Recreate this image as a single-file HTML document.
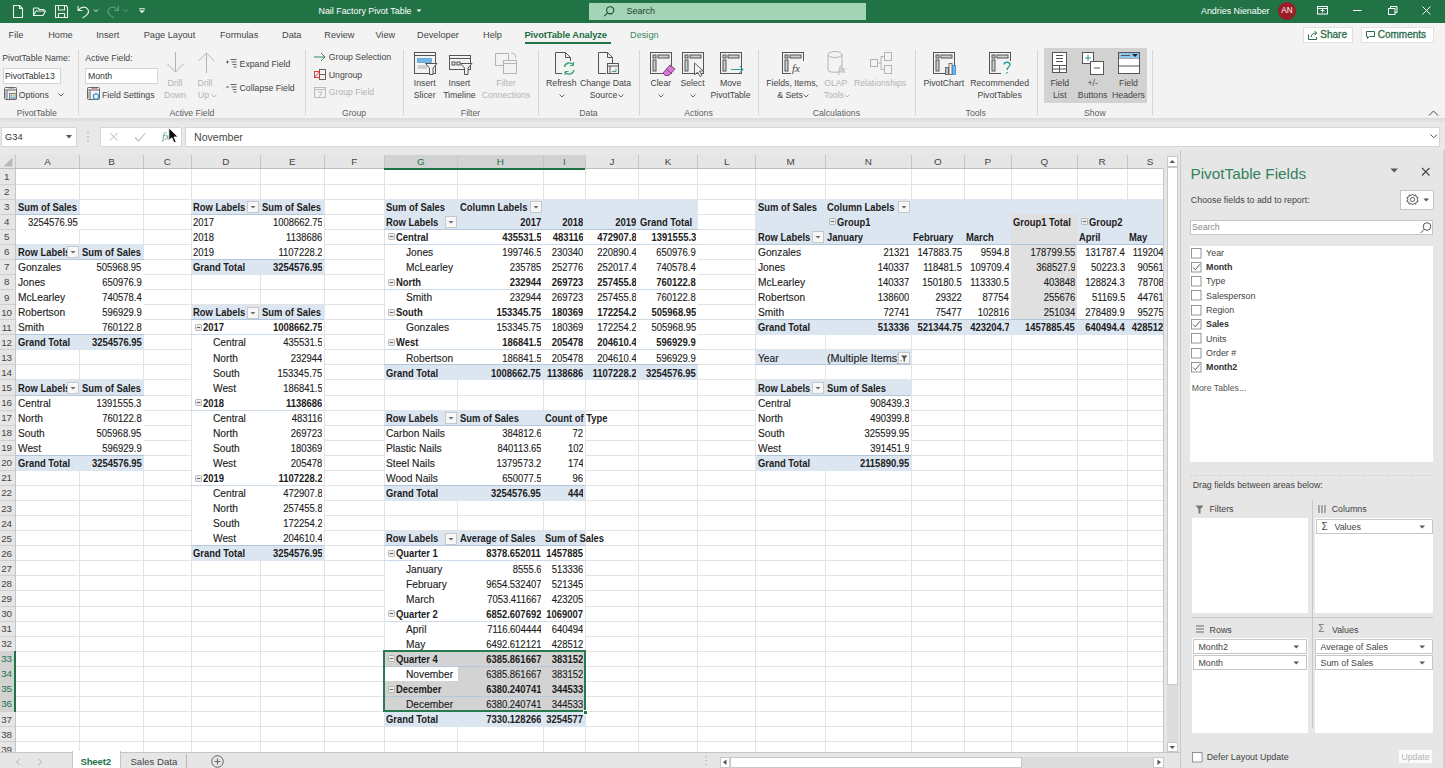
<!DOCTYPE html><html><head><meta charset="utf-8"><title>Excel</title><style>
html,body{margin:0;padding:0;}
body{width:1445px;height:768px;overflow:hidden;position:relative;background:#e6e6e6;font-family:"Liberation Sans",sans-serif;}
div{box-sizing:border-box;}
svg{overflow:visible}
.c{-webkit-text-stroke:0.12px currentColor}
.cb{}
</style></head><body>
<div style="position:absolute;left:0px;top:0px;width:1445px;height:23px;background:#217346;"></div>
<svg style="position:absolute;left:0px;top:0px;" width="160" height="23" viewBox="0 0 160 23">
<g fill="none" stroke="#e8f3ec" stroke-width="1.1" stroke-linejoin="round">
 <path d="M13.5 5.5 H19.5 L22.5 8.5 V17.5 H13.5 Z"/>
 <path d="M19.5 5.5 V8.5 H22.5"/>
 <path d="M33.5 8 H38 L39.5 9.5 H44 V11 M33.5 8 V15.5 H43 L45.5 11 H36 L33.5 15.5"/>
 <path d="M55.5 5.5 H66 L67.5 7 V17.5 H55.5 Z"/>
 <path d="M58.5 5.5 V10 H64.5 V5.5 M58.5 17.5 V13.5 H64.5 V17.5"/>
 <path d="M78 6 V10.5 H82.5 M78.5 10.2 C81 6.5 86 6 88 9.5 C90 13 86 16 82.5 18"/>
 <path d="M94 9.5 L96 11.5 L98 9.5" stroke-width="1"/>
</g>
<g fill="none" stroke="#5fa07d" stroke-width="1.1" stroke-linejoin="round">
 <path d="M118.5 6 V10.5 H114 M118 10.2 C115.5 6.5 110.5 6 108.5 9.5 C106.5 13 110.5 16 114 18"/>
 <path d="M123.5 9.5 L125.5 11.5 L127.5 9.5" stroke-width="1"/>
</g>
<g fill="#e8f3ec" stroke="none">
 <rect x="139" y="8.2" width="6" height="1"/>
 <path d="M139 10.3 H145 L142 13.3 Z"/>
</g>
</svg>
<div style="position:absolute;left:318.5px;top:3.50px;line-height:14px;font-size:8.9px;color:#ffffff;font-weight:normal;white-space:nowrap;">Nail Factory Pivot Table</div>
<svg style="position:absolute;left:416px;top:9px;" width="6" height="4" viewBox="0 0 6 4"><path d="M0.5 0.5 L3 3 L5.5 0.5" fill="#fff"/></svg>
<div style="position:absolute;left:589px;top:3px;width:277px;height:17px;background:#a4d4b6;"></div>
<svg style="position:absolute;left:602px;top:5px;" width="14" height="14" viewBox="0 0 14 14"><g fill="none" stroke="#1d4a30" stroke-width="1.1"><circle cx="8.2" cy="5.3" r="3.6"/><path d="M5.6 7.9 L2.3 11.2"/></g></svg>
<div style="position:absolute;left:626.5px;top:4.00px;line-height:14px;font-size:9px;color:#1f3d2b;font-weight:normal;white-space:nowrap;">Search</div>
<div style="position:absolute;left:1201px;top:4.20px;line-height:14px;font-size:8.9px;color:#ffffff;font-weight:normal;white-space:nowrap;">Andries Nienaber</div>
<div style="position:absolute;left:1278px;top:2px;width:18px;height:18px;background:#9c1c27;border-radius:50%;"></div>
<div style="position:absolute;left:1278.00px;width:18px;text-align:center;top:4.20px;line-height:14px;font-size:8.2px;color:#ffffff;font-weight:normal;white-space:nowrap;">AN</div>
<svg style="position:absolute;left:1310px;top:0px;" width="135" height="23" viewBox="0 0 135 23">
<g fill="none" stroke="#ffffff" stroke-width="1">
 <rect x="7.5" y="6.5" width="10" height="7.5"/>
 <path d="M10.5 10.5 H14.5 M12.5 8.5 V12.5 M7.5 8.5 H17.5" stroke-width="0.9"/>
 <path d="M43 10.5 H51.5"/>
 <rect x="78.5" y="8.5" width="6.5" height="6"/>
 <path d="M80.5 8.5 V6.5 H87 V12.5 H85"/>
 <path d="M112.5 6.5 L120.5 14.5 M120.5 6.5 L112.5 14.5"/>
</g></svg>
<div style="position:absolute;left:0px;top:23px;width:1445px;height:95px;background:#f3f3f3;"></div>
<div style="position:absolute;left:0px;top:118px;width:1445px;height:4px;background:linear-gradient(#d9d9d9,#e6e6e6);"></div>
<div style="position:absolute;left:8.6px;top:28.00px;line-height:14px;font-size:9.2px;color:#444444;font-weight:normal;white-space:nowrap;">File</div>
<div style="position:absolute;left:48.2px;top:28.00px;line-height:14px;font-size:9.2px;color:#444444;font-weight:normal;white-space:nowrap;">Home</div>
<div style="position:absolute;left:96.3px;top:28.00px;line-height:14px;font-size:9.2px;color:#444444;font-weight:normal;white-space:nowrap;">Insert</div>
<div style="position:absolute;left:143.7px;top:28.00px;line-height:14px;font-size:9.2px;color:#444444;font-weight:normal;white-space:nowrap;">Page Layout</div>
<div style="position:absolute;left:220px;top:28.00px;line-height:14px;font-size:9.2px;color:#444444;font-weight:normal;white-space:nowrap;">Formulas</div>
<div style="position:absolute;left:282px;top:28.00px;line-height:14px;font-size:9.2px;color:#444444;font-weight:normal;white-space:nowrap;">Data</div>
<div style="position:absolute;left:324.3px;top:28.00px;line-height:14px;font-size:9.2px;color:#444444;font-weight:normal;white-space:nowrap;">Review</div>
<div style="position:absolute;left:375.4px;top:28.00px;line-height:14px;font-size:9.2px;color:#444444;font-weight:normal;white-space:nowrap;">View</div>
<div style="position:absolute;left:417px;top:28.00px;line-height:14px;font-size:9.2px;color:#444444;font-weight:normal;white-space:nowrap;">Developer</div>
<div style="position:absolute;left:483px;top:28.00px;line-height:14px;font-size:9.2px;color:#444444;font-weight:normal;white-space:nowrap;">Help</div>
<div style="position:absolute;left:524.4px;top:28.00px;line-height:14px;font-size:9.4px;color:#1e6e42;font-weight:bold;white-space:nowrap;letter-spacing:-0.1px;">PivotTable Analyze</div>
<div style="position:absolute;left:524.5px;top:42.3px;width:86px;height:1.6px;background:#217346;"></div>
<div style="position:absolute;left:630px;top:28.00px;line-height:14px;font-size:9.2px;color:#3b8662;font-weight:normal;white-space:nowrap;">Design</div>
<div style="position:absolute;left:1303px;top:27px;width:50px;height:16px;background:#fff;border:1px solid #e1e1e1;"></div>
<svg style="position:absolute;left:1307px;top:29px;" width="12" height="12" viewBox="0 0 12 12"><g fill="none" stroke="#2b6b4b" stroke-width="1"><path d="M1.5 5.5 V10.5 H9.5 V8"/><path d="M4 8 C4.5 5 6.5 4 9.5 4 M7.5 2 L9.8 4 L7.5 6"/></g></svg>
<div style="position:absolute;left:1320.3px;top:28.30px;line-height:14px;font-size:10px;color:#2b6b4b;font-weight:normal;white-space:nowrap;-webkit-text-stroke:0.3px #2b6b4b;">Share</div>
<div style="position:absolute;left:1361px;top:27px;width:73px;height:16px;background:#fff;border:1px solid #e1e1e1;"></div>
<svg style="position:absolute;left:1365px;top:29px;" width="12" height="12" viewBox="0 0 12 12"><g fill="none" stroke="#2b6b4b" stroke-width="1"><path d="M1.5 2.5 H9.5 V7.5 H4.5 L2.5 9.5 V7.5 H1.5 Z"/></g></svg>
<div style="position:absolute;left:1377.7px;top:28.30px;line-height:14px;font-size:10px;color:#2b6b4b;font-weight:normal;white-space:nowrap;-webkit-text-stroke:0.3px #2b6b4b;">Comments</div>
<div style="position:absolute;left:78px;top:50px;width:1px;height:65px;background:#d6d6d6;"></div>
<div style="position:absolute;left:305px;top:50px;width:1px;height:65px;background:#d6d6d6;"></div>
<div style="position:absolute;left:403px;top:50px;width:1px;height:65px;background:#d6d6d6;"></div>
<div style="position:absolute;left:538px;top:50px;width:1px;height:65px;background:#d6d6d6;"></div>
<div style="position:absolute;left:639px;top:50px;width:1px;height:65px;background:#d6d6d6;"></div>
<div style="position:absolute;left:758px;top:50px;width:1px;height:65px;background:#d6d6d6;"></div>
<div style="position:absolute;left:915px;top:50px;width:1px;height:65px;background:#d6d6d6;"></div>
<div style="position:absolute;left:1037px;top:50px;width:1px;height:65px;background:#d6d6d6;"></div>
<div style="position:absolute;left:1152px;top:50px;width:1px;height:65px;background:#d6d6d6;"></div>
<div style="position:absolute;left:-23.30px;width:120px;text-align:center;top:105.60px;line-height:14px;font-size:8.7px;color:#5e5e5e;font-weight:normal;white-space:nowrap;">PivotTable</div>
<div style="position:absolute;left:132.00px;width:120px;text-align:center;top:105.60px;line-height:14px;font-size:8.7px;color:#5e5e5e;font-weight:normal;white-space:nowrap;">Active Field</div>
<div style="position:absolute;left:294.00px;width:120px;text-align:center;top:105.60px;line-height:14px;font-size:8.7px;color:#5e5e5e;font-weight:normal;white-space:nowrap;">Group</div>
<div style="position:absolute;left:410.50px;width:120px;text-align:center;top:105.60px;line-height:14px;font-size:8.7px;color:#5e5e5e;font-weight:normal;white-space:nowrap;">Filter</div>
<div style="position:absolute;left:528.50px;width:120px;text-align:center;top:105.60px;line-height:14px;font-size:8.7px;color:#5e5e5e;font-weight:normal;white-space:nowrap;">Data</div>
<div style="position:absolute;left:638.50px;width:120px;text-align:center;top:105.60px;line-height:14px;font-size:8.7px;color:#5e5e5e;font-weight:normal;white-space:nowrap;">Actions</div>
<div style="position:absolute;left:776.40px;width:120px;text-align:center;top:105.60px;line-height:14px;font-size:8.7px;color:#5e5e5e;font-weight:normal;white-space:nowrap;">Calculations</div>
<div style="position:absolute;left:915.70px;width:120px;text-align:center;top:105.60px;line-height:14px;font-size:8.7px;color:#5e5e5e;font-weight:normal;white-space:nowrap;">Tools</div>
<div style="position:absolute;left:1034.80px;width:120px;text-align:center;top:105.60px;line-height:14px;font-size:8.7px;color:#5e5e5e;font-weight:normal;white-space:nowrap;">Show</div>
<div style="position:absolute;left:2.2px;top:51.20px;line-height:14px;font-size:8.7px;color:#444444;font-weight:normal;white-space:nowrap;">PivotTable Name:</div>
<div style="position:absolute;left:2.5px;top:68px;width:58px;height:15.5px;background:#fff;border:1px solid #d4d4d4;"></div>
<div style="position:absolute;left:5px;top:69.00px;line-height:14px;font-size:8.7px;color:#333;font-weight:normal;white-space:nowrap;">PivotTable13</div>
<svg style="position:absolute;left:4px;top:87px;" width="14" height="14" viewBox="0 0 14 14"><g fill="none" stroke="#666" stroke-width="1"><rect x="0.5" y="0.5" width="12" height="12" rx="1"/><path d="M0.5 3 H12.5 M3 3 V12.5"/></g><rect x="4.5" y="1.2" width="6" height="1" fill="#aaa"/><rect x="1.2" y="5" width="1" height="6" fill="#aaa"/><rect x="5.5" y="6.5" width="6.5" height="5.5" fill="#f3f3f3" stroke="#666" stroke-width="0.8"/><rect x="6.5" y="7.5" width="2" height="1.6" fill="#4ab6e8"/><rect x="9" y="7.5" width="2" height="1.6" fill="#e8c84a"/><rect x="6.5" y="9.6" width="2" height="1.6" fill="#4ab6a0"/><rect x="9" y="9.6" width="2" height="1.6" fill="#4ab6e8"/></svg>
<div style="position:absolute;left:18.8px;top:87.50px;line-height:14px;font-size:8.7px;color:#444444;font-weight:normal;white-space:nowrap;">Options</div>
<svg style="position:absolute;left:57.5px;top:93px;" width="6" height="4" viewBox="0 0 6 4"><path d="M0.5 0.5 L3 3 L5.5 0.5" fill="none" stroke="#555" stroke-width="0.9"/></svg>
<div style="position:absolute;left:85.3px;top:51.20px;line-height:14px;font-size:8.7px;color:#444444;font-weight:normal;white-space:nowrap;">Active Field:</div>
<div style="position:absolute;left:85.3px;top:68px;width:72.5px;height:15.5px;background:#fff;border:1px solid #d4d4d4;"></div>
<div style="position:absolute;left:88px;top:69.00px;line-height:14px;font-size:8.7px;color:#333;font-weight:normal;white-space:nowrap;">Month</div>
<svg style="position:absolute;left:86.5px;top:87px;" width="14" height="14" viewBox="0 0 14 14"><g fill="none" stroke="#666" stroke-width="1"><rect x="0.5" y="0.5" width="12" height="12" rx="1"/><path d="M0.5 3 H12.5 M3 3 V12.5"/></g><rect x="4.5" y="1.2" width="6" height="1" fill="#c77"/><rect x="1.2" y="5" width="1" height="6" fill="#aaa"/><path d="M9 6.5 L11.5 8 V11 L9 12.5 L6.5 11 V8 Z" fill="#f3f3f3" stroke="#2f9ad6" stroke-width="1.3"/></svg>
<div style="position:absolute;left:101.9px;top:87.50px;line-height:14px;font-size:8.7px;color:#444444;font-weight:normal;white-space:nowrap;">Field Settings</div>
<svg style="position:absolute;left:165px;top:51px;" width="22" height="24" viewBox="0 0 22 24"><g fill="none" stroke="#b4b4b4" stroke-width="1"><path d="M10.5 1 V21 M2.5 13 L10.5 21 L18.5 13"/></g></svg>
<div style="position:absolute;left:155.00px;width:40px;text-align:center;top:76.30px;line-height:14px;font-size:8.7px;color:#b4b4b4;font-weight:normal;white-space:nowrap;">Drill</div>
<div style="position:absolute;left:155.00px;width:40px;text-align:center;top:88.40px;line-height:14px;font-size:8.7px;color:#b4b4b4;font-weight:normal;white-space:nowrap;">Down</div>
<svg style="position:absolute;left:196px;top:51px;" width="22" height="24" viewBox="0 0 22 24"><g fill="none" stroke="#b4b4b4" stroke-width="1"><path d="M10.5 2 V22 M2.5 10 L10.5 2 L18.5 10"/></g></svg>
<div style="position:absolute;left:185.00px;width:40px;text-align:center;top:76.30px;line-height:14px;font-size:8.7px;color:#b4b4b4;font-weight:normal;white-space:nowrap;">Drill</div>
<div style="position:absolute;left:183.50px;width:40px;text-align:center;top:88.40px;line-height:14px;font-size:8.7px;color:#b4b4b4;font-weight:normal;white-space:nowrap;">Up</div>
<svg style="position:absolute;left:211px;top:93.5px;" width="6" height="4" viewBox="0 0 6 4"><path d="M0.5 0.5 L3 3 L5.5 0.5" fill="none" stroke="#b4b4b4" stroke-width="0.9"/></svg>
<svg style="position:absolute;left:225px;top:57px;" width="14" height="12" viewBox="0 0 14 12"><g fill="none" stroke="#555" stroke-width="0.9"><path d="M1 5 H4 M2.5 3.5 V6.5 M5.5 2.5 H11.5 M6.5 5 H11.5 M7.5 7.5 H11.5 M8.5 10 H11.5"/></g></svg>
<div style="position:absolute;left:239.6px;top:56.90px;line-height:14px;font-size:8.7px;color:#444444;font-weight:normal;white-space:nowrap;">Expand Field</div>
<svg style="position:absolute;left:225px;top:82px;" width="14" height="12" viewBox="0 0 14 12"><g fill="none" stroke="#555" stroke-width="0.9"><path d="M1 5 H4 M5.5 2.5 H11.5 M6.5 5 H11.5 M7.5 7.5 H11.5 M8.5 10 H11.5"/></g></svg>
<div style="position:absolute;left:239.6px;top:81.30px;line-height:14px;font-size:8.7px;color:#444444;font-weight:normal;white-space:nowrap;">Collapse Field</div>
<svg style="position:absolute;left:313px;top:51px;" width="14" height="12" viewBox="0 0 14 12"><g fill="none" stroke="#2f8a5e" stroke-width="1"><path d="M1 6 H12 M8 2 L12 6 L8 10"/></g></svg>
<div style="position:absolute;left:328.8px;top:50.30px;line-height:14px;font-size:8.7px;color:#444444;font-weight:normal;white-space:nowrap;">Group Selection</div>
<svg style="position:absolute;left:313px;top:68px;" width="14" height="13" viewBox="0 0 14 13"><g fill="none" stroke="#555" stroke-width="0.9"><rect x="6.5" y="1.5" width="6" height="10"/><path d="M6.5 6.5 H12.5"/></g><g fill="none" stroke="#d13438" stroke-width="0.9"><rect x="1.5" y="3.5" width="5" height="6"/><path d="M1.5 9.5 L6.5 3.5"/></g></svg>
<div style="position:absolute;left:328.8px;top:67.80px;line-height:14px;font-size:8.7px;color:#444444;font-weight:normal;white-space:nowrap;">Ungroup</div>
<svg style="position:absolute;left:313px;top:85px;" width="14" height="13" viewBox="0 0 14 13"><g fill="none" stroke="#b4b4b4" stroke-width="0.9"><rect x="1.5" y="2.5" width="11" height="10"/><path d="M1.5 4.5 H12.5 M5 7 H9 L6.5 11.5"/></g></svg>
<div style="position:absolute;left:328.8px;top:85.30px;line-height:14px;font-size:8.7px;color:#b4b4b4;font-weight:normal;white-space:nowrap;">Group Field</div>
<svg style="position:absolute;left:414px;top:52px;" width="24" height="24" viewBox="0 0 24 24"><g fill="none" stroke="#555" stroke-width="1"><rect x="0.5" y="0.5" width="21" height="21"/><path d="M0.5 3.5 H21.5"/></g><rect x="3.5" y="6.5" width="14" height="4" fill="#6cb7ef" stroke="#4a8ec2" stroke-width="0.6"/><rect x="3.5" y="13" width="10" height="4" fill="#cfcfcf"/><path d="M11.5 11.5 H23 L19 16 V22.5 H15.5 V16 Z" fill="#f3f3f3" stroke="#555" stroke-width="1"/></svg>
<div style="position:absolute;left:399.70px;width:50px;text-align:center;top:76.30px;line-height:14px;font-size:8.7px;color:#444444;font-weight:normal;white-space:nowrap;">Insert</div>
<div style="position:absolute;left:399.70px;width:50px;text-align:center;top:88.40px;line-height:14px;font-size:8.7px;color:#444444;font-weight:normal;white-space:nowrap;">Slicer</div>
<svg style="position:absolute;left:449px;top:55px;" width="24" height="21" viewBox="0 0 24 21"><g fill="none" stroke="#555" stroke-width="1"><rect x="0.5" y="0.5" width="21" height="14"/><path d="M0.5 3.5 H21.5"/><rect x="3" y="7" width="3" height="3"/><rect x="8" y="7" width="3" height="3"/></g><path d="M11.5 8.5 H23 L19 13 V19.5 H15.5 V13 Z" fill="#f3f3f3" stroke="#555" stroke-width="1"/></svg>
<div style="position:absolute;left:434.40px;width:50px;text-align:center;top:76.30px;line-height:14px;font-size:8.7px;color:#444444;font-weight:normal;white-space:nowrap;">Insert</div>
<div style="position:absolute;left:434.40px;width:50px;text-align:center;top:88.40px;line-height:14px;font-size:8.7px;color:#444444;font-weight:normal;white-space:nowrap;">Timeline</div>
<svg style="position:absolute;left:495px;top:51px;" width="24" height="24" viewBox="0 0 24 24"><g fill="none" stroke="#b4b4b4" stroke-width="1"><rect x="0.5" y="2.5" width="13" height="12"/><rect x="8.5" y="9.5" width="13" height="13" fill="#f3f3f3"/><path d="M8.5 12.5 H21.5 M16 2 C19 2 21 4 21 7"/></g></svg>
<div style="position:absolute;left:471.00px;width:70px;text-align:center;top:76.30px;line-height:14px;font-size:8.7px;color:#b4b4b4;font-weight:normal;white-space:nowrap;">Filter</div>
<div style="position:absolute;left:471.00px;width:70px;text-align:center;top:88.40px;line-height:14px;font-size:8.7px;color:#b4b4b4;font-weight:normal;white-space:nowrap;">Connections</div>
<svg style="position:absolute;left:552px;top:52px;" width="24" height="24" viewBox="0 0 24 24"><g fill="none" stroke="#555" stroke-width="1"><path d="M3.5 0.5 H13.5 L18.5 5.5 V9 M3.5 0.5 V21.5 H10 M13.5 0.5 V5.5 H18.5"/></g><g fill="none" stroke="#3aa572" stroke-width="1.4"><path d="M12.5 15 A5 5 0 0 1 21.5 13 M22 18 A5 5 0 0 1 13 20"/><path d="M21.5 10 V13.5 H18 M13 23 V19.5 H16.5" stroke-width="1"/></g></svg>
<div style="position:absolute;left:536.30px;width:50px;text-align:center;top:76.30px;line-height:14px;font-size:8.7px;color:#444444;font-weight:normal;white-space:nowrap;">Refresh</div>
<svg style="position:absolute;left:558.5px;top:93.5px;" width="6" height="4" viewBox="0 0 6 4"><path d="M0.5 0.5 L3 3 L5.5 0.5" fill="none" stroke="#555" stroke-width="0.9"/></svg>
<svg style="position:absolute;left:597px;top:52px;" width="24" height="24" viewBox="0 0 24 24"><g fill="none" stroke="#555" stroke-width="1"><path d="M1.5 0.5 H10.5 L15.5 5.5 V11 M1.5 0.5 V21.5 H9 M10.5 0.5 V5.5 H15.5"/><rect x="10.5" y="11.5" width="11" height="10" fill="#f3f3f3"/><path d="M10.5 14 H21.5 M13 14 V21.5"/></g><path d="M15 19.5 H19 V16.5" fill="none" stroke="#3aa572" stroke-width="1"/></svg>
<div style="position:absolute;left:570.50px;width:70px;text-align:center;top:76.30px;line-height:14px;font-size:8.7px;color:#444444;font-weight:normal;white-space:nowrap;">Change Data</div>
<div style="position:absolute;left:568.50px;width:70px;text-align:center;top:88.40px;line-height:14px;font-size:8.7px;color:#444444;font-weight:normal;white-space:nowrap;">Source</div>
<svg style="position:absolute;left:617.5px;top:93.5px;" width="6" height="4" viewBox="0 0 6 4"><path d="M0.5 0.5 L3 3 L5.5 0.5" fill="none" stroke="#555" stroke-width="0.9"/></svg>
<svg style="position:absolute;left:650px;top:52px;" width="25" height="24" viewBox="0 0 25 24"><g fill="none" stroke="#555" stroke-width="1"><rect x="0.5" y="0.5" width="21" height="21"/><rect x="3" y="3" width="3" height="3" fill="#cfcfcf"/><rect x="8" y="3" width="11" height="3" fill="#cfcfcf"/><rect x="3" y="8" width="3" height="11" fill="#cfcfcf"/></g><path d="M13 21 L20 13 L25 17 L19 23.5 H15 Z" fill="#d479d6" stroke="#7a3b7c" stroke-width="0.9"/><path d="M16 17 L21 21" stroke="#7a3b7c" stroke-width="0.9"/></svg>
<div style="position:absolute;left:635.80px;width:50px;text-align:center;top:76.30px;line-height:14px;font-size:8.7px;color:#444444;font-weight:normal;white-space:nowrap;">Clear</div>
<svg style="position:absolute;left:658px;top:93.5px;" width="6" height="4" viewBox="0 0 6 4"><path d="M0.5 0.5 L3 3 L5.5 0.5" fill="none" stroke="#555" stroke-width="0.9"/></svg>
<svg style="position:absolute;left:682px;top:52px;" width="24" height="24" viewBox="0 0 24 24"><g fill="none" stroke="#555" stroke-width="1"><rect x="0.5" y="0.5" width="21" height="21"/><rect x="3" y="3" width="3" height="3" fill="#cfcfcf"/><rect x="8" y="3" width="11" height="3" fill="#cfcfcf"/><rect x="3" y="8" width="3" height="11" fill="#cfcfcf"/></g><path d="M12.5 11 V23 L15.5 20 L18 24.5 L20 23.5 L17.5 19 H21.5 Z" fill="#f3f3f3" stroke="#555" stroke-width="0.9"/></svg>
<div style="position:absolute;left:667.50px;width:50px;text-align:center;top:76.30px;line-height:14px;font-size:8.7px;color:#444444;font-weight:normal;white-space:nowrap;">Select</div>
<svg style="position:absolute;left:689.5px;top:93.5px;" width="6" height="4" viewBox="0 0 6 4"><path d="M0.5 0.5 L3 3 L5.5 0.5" fill="none" stroke="#555" stroke-width="0.9"/></svg>
<svg style="position:absolute;left:720px;top:52px;" width="24" height="24" viewBox="0 0 24 24"><g fill="none" stroke="#555" stroke-width="1"><rect x="0.5" y="0.5" width="21" height="21"/><rect x="3" y="3" width="3" height="3" fill="#cfcfcf"/><rect x="8" y="3" width="11" height="3" fill="#cfcfcf"/><rect x="3" y="8" width="3" height="11" fill="#cfcfcf"/></g><path d="M11 17.5 H23 M19.5 14 L23 17.5 L19.5 21" fill="none" stroke="#2f9aa0" stroke-width="1"/></svg>
<div style="position:absolute;left:695.60px;width:70px;text-align:center;top:76.30px;line-height:14px;font-size:8.7px;color:#444444;font-weight:normal;white-space:nowrap;">Move</div>
<div style="position:absolute;left:695.60px;width:70px;text-align:center;top:88.40px;line-height:14px;font-size:8.7px;color:#444444;font-weight:normal;white-space:nowrap;">PivotTable</div>
<svg style="position:absolute;left:782px;top:52px;" width="24" height="24" viewBox="0 0 24 24"><g fill="none" stroke="#555" stroke-width="1"><rect x="0.5" y="0.5" width="21" height="21"/><rect x="3" y="3" width="3" height="3" fill="#cfcfcf"/><rect x="8" y="3" width="11" height="3" fill="#cfcfcf"/><rect x="3" y="8" width="3" height="11" fill="#cfcfcf"/></g><rect x="9" y="9" width="14" height="13" fill="#f3f3f3"/><text x="10" y="20" font-family="Liberation Serif" font-style="italic" font-size="11" fill="#444">fx</text></svg>
<div style="position:absolute;left:752.10px;width:80px;text-align:center;top:76.30px;line-height:14px;font-size:8.7px;color:#444444;font-weight:normal;white-space:nowrap;">Fields, Items,</div>
<div style="position:absolute;left:750.00px;width:80px;text-align:center;top:88.40px;line-height:14px;font-size:8.7px;color:#444444;font-weight:normal;white-space:nowrap;">&amp; Sets</div>
<svg style="position:absolute;left:802.5px;top:93.5px;" width="6" height="4" viewBox="0 0 6 4"><path d="M0.5 0.5 L3 3 L5.5 0.5" fill="none" stroke="#555" stroke-width="0.9"/></svg>
<svg style="position:absolute;left:827px;top:51px;" width="24" height="25" viewBox="0 0 24 25"><g fill="none" stroke="#b4b4b4" stroke-width="1"><ellipse cx="8" cy="3.5" rx="7" ry="3"/><path d="M1 3.5 V19 C1 22 15 22 15 19 V3.5"/></g><text x="11" y="22" font-family="Liberation Serif" font-style="italic" font-size="11" fill="#b4b4b4">fx</text></svg>
<div style="position:absolute;left:810.80px;width:50px;text-align:center;top:76.30px;line-height:14px;font-size:8.7px;color:#b4b4b4;font-weight:normal;white-space:nowrap;">OLAP</div>
<div style="position:absolute;left:808.80px;width:50px;text-align:center;top:88.40px;line-height:14px;font-size:8.7px;color:#b4b4b4;font-weight:normal;white-space:nowrap;">Tools</div>
<svg style="position:absolute;left:843.5px;top:93.5px;" width="6" height="4" viewBox="0 0 6 4"><path d="M0.5 0.5 L3 3 L5.5 0.5" fill="none" stroke="#b4b4b4" stroke-width="0.9"/></svg>
<svg style="position:absolute;left:870px;top:52px;" width="23" height="24" viewBox="0 0 23 24"><g fill="none" stroke="#b4b4b4" stroke-width="1"><rect x="0.5" y="7.5" width="7" height="7"/><rect x="14.5" y="0.5" width="7" height="8"/><rect x="14.5" y="13.5" width="7" height="8"/><path d="M7.5 11 H11 V4.5 H14.5 M11 11 V17.5 H14.5"/></g></svg>
<div style="position:absolute;left:840.00px;width:80px;text-align:center;top:76.30px;line-height:14px;font-size:8.7px;color:#b4b4b4;font-weight:normal;white-space:nowrap;">Relationships</div>
<svg style="position:absolute;left:933px;top:52px;" width="24" height="24" viewBox="0 0 24 24"><g fill="none" stroke="#555" stroke-width="1"><rect x="0.5" y="0.5" width="21" height="21"/><rect x="3" y="3" width="3" height="3" fill="#cfcfcf"/><rect x="8" y="3" width="11" height="3" fill="#cfcfcf"/><rect x="3" y="8" width="3" height="11" fill="#cfcfcf"/></g><rect x="12.5" y="15.5" width="3" height="7" fill="#bdbdbd" stroke="#555" stroke-width="0.8"/><rect x="16" y="11.5" width="3" height="11" fill="#f3f3f3" stroke="#555" stroke-width="0.8"/><rect x="19.5" y="13.5" width="3" height="9" fill="#6cb7ef" stroke="#3f86c2" stroke-width="0.8"/></svg>
<div style="position:absolute;left:908.80px;width:70px;text-align:center;top:76.30px;line-height:14px;font-size:8.7px;color:#444444;font-weight:normal;white-space:nowrap;">PivotChart</div>
<svg style="position:absolute;left:989px;top:52px;" width="24" height="24" viewBox="0 0 24 24"><g fill="none" stroke="#555" stroke-width="1"><rect x="0.5" y="0.5" width="21" height="21"/><rect x="3" y="3" width="3" height="3" fill="#cfcfcf"/><rect x="8" y="3" width="11" height="3" fill="#cfcfcf"/><rect x="3" y="8" width="3" height="11" fill="#cfcfcf"/></g><rect x="12" y="9" width="12" height="15" fill="#f3f3f3"/><path d="M15 12.5 C15 9.5 21 9.5 21 12.5 C21 15 18 15 18 18 M18 20 V21.5" fill="none" stroke="#2f9aa0" stroke-width="1.3"/></svg>
<div style="position:absolute;left:959.60px;width:80px;text-align:center;top:76.30px;line-height:14px;font-size:8.7px;color:#444444;font-weight:normal;white-space:nowrap;">Recommended</div>
<div style="position:absolute;left:959.60px;width:80px;text-align:center;top:88.40px;line-height:14px;font-size:8.7px;color:#444444;font-weight:normal;white-space:nowrap;">PivotTables</div>
<div style="position:absolute;left:1044.3px;top:48.4px;width:102.5px;height:54.7px;background:#d2d2d2;"></div>
<svg style="position:absolute;left:1052px;top:52px;" width="16" height="22" viewBox="0 0 16 22"><g fill="none" stroke="#555" stroke-width="1"><rect x="0.5" y="0.5" width="14" height="20" fill="#fff"/><path d="M0.5 13.5 H14.5 M0.5 17 H14.5 M7.5 13.5 V20.5 M4 3.5 H11 M4 6.5 H11 M4 9.5 H11"/></g></svg>
<div style="position:absolute;left:1034.80px;width:50px;text-align:center;top:76.30px;line-height:14px;font-size:8.7px;color:#444444;font-weight:normal;white-space:nowrap;">Field</div>
<div style="position:absolute;left:1034.80px;width:50px;text-align:center;top:88.40px;line-height:14px;font-size:8.7px;color:#444444;font-weight:normal;white-space:nowrap;">List</div>
<svg style="position:absolute;left:1082px;top:52px;" width="22" height="23" viewBox="0 0 22 23"><g fill="none" stroke="#555" stroke-width="1"><rect x="0.5" y="0.5" width="11" height="11" fill="#fff"/><rect x="8.5" y="9.5" width="13" height="13" fill="#fff"/><path d="M12 16 H18"/></g><path d="M3 6 H9 M6 3 V9" stroke="#2f9aa0" stroke-width="1.1"/></svg>
<div style="position:absolute;left:1067.60px;width:50px;text-align:center;top:76.30px;line-height:14px;font-size:8.7px;color:#444444;font-weight:normal;white-space:nowrap;">+/-</div>
<div style="position:absolute;left:1067.60px;width:50px;text-align:center;top:88.40px;line-height:14px;font-size:8.7px;color:#444444;font-weight:normal;white-space:nowrap;">Buttons</div>
<svg style="position:absolute;left:1118px;top:52px;" width="22" height="22" viewBox="0 0 22 22"><rect x="0.5" y="0.5" width="21" height="6" fill="#8ec8f0" stroke="#555" stroke-width="1"/><rect x="0.5" y="6.5" width="21" height="15" fill="#fff"/><g fill="none" stroke="#555" stroke-width="1"><rect x="0.5" y="0.5" width="21" height="21"/><path d="M0.5 14 H21.5 M3 3.5 H12"/></g><path d="M14 2 H20 L17 5 Z" fill="#222"/></svg>
<div style="position:absolute;left:1103.50px;width:50px;text-align:center;top:76.30px;line-height:14px;font-size:8.7px;color:#444444;font-weight:normal;white-space:nowrap;">Field</div>
<div style="position:absolute;left:1103.50px;width:50px;text-align:center;top:88.40px;line-height:14px;font-size:8.7px;color:#444444;font-weight:normal;white-space:nowrap;">Headers</div>
<svg style="position:absolute;left:1428px;top:110px;" width="12" height="7" viewBox="0 0 12 7"><path d="M1 5.5 L5.5 1 L10 5.5" fill="none" stroke="#444" stroke-width="1"/></svg>
<div style="position:absolute;left:0px;top:122px;width:1445px;height:32px;background:#e8e8e8;"></div>
<div style="position:absolute;left:0.5px;top:127px;width:76px;height:19.5px;background:#fff;border:1px solid #d6d6d6;"></div>
<div style="position:absolute;left:5px;top:130.00px;line-height:14px;font-size:9.3px;color:#333;font-weight:normal;white-space:nowrap;">G34</div>
<svg style="position:absolute;left:66px;top:135px;" width="7" height="4" viewBox="0 0 7 4"><path d="M0 0 H6 L3 3.5 Z" fill="#555"/></svg>
<svg style="position:absolute;left:86px;top:131px;" width="4" height="12" viewBox="0 0 4 12"><g fill="#9a9a9a"><rect x="1.5" y="1" width="1" height="1.3"/><rect x="1.5" y="5" width="1" height="1.3"/><rect x="1.5" y="9" width="1" height="1.3"/></g></svg>
<div style="position:absolute;left:99.5px;top:127px;width:82.5px;height:19.5px;background:#fff;border:1px solid #d6d6d6;"></div>
<svg style="position:absolute;left:109px;top:132px;" width="10" height="10" viewBox="0 0 10 10"><path d="M1 1 L8.5 8.5 M8.5 1 L1 8.5" stroke="#b9b9b9" stroke-width="1" fill="none"/></svg>
<svg style="position:absolute;left:134px;top:132px;" width="12" height="10" viewBox="0 0 12 10"><path d="M1 5.5 L4.5 9 L11 1.5" stroke="#b9b9b9" stroke-width="1.1" fill="none"/></svg>
<svg style="position:absolute;left:160px;top:129px;" width="14" height="14" viewBox="0 0 14 14"><text x="2" y="11" font-family="Liberation Serif" font-style="italic" font-size="11" fill="#4aa57c">fx</text></svg>
<div style="position:absolute;left:185px;top:127px;width:255px;height:19.5px;background:#fff;border:1px solid #d6d6d6;border-right:none;"></div>
<div style="position:absolute;left:440px;top:127px;width:1000px;height:19.5px;background:#fff;border:1px solid #d6d6d6;border-left:none;"></div>
<div style="position:absolute;left:194px;top:130.00px;line-height:14px;font-size:10.6px;color:#3e4a44;font-weight:normal;white-space:nowrap;">November</div>
<svg style="position:absolute;left:1430px;top:134px;" width="8" height="5" viewBox="0 0 8 5"><path d="M0.5 0.5 L3.8 3.8 L7 0.5" fill="none" stroke="#555" stroke-width="1"/></svg>
<div style="position:absolute;left:0px;top:152px;width:1163.5px;height:17px;background:#e6e6e6;"></div>
<div style="position:absolute;left:0px;top:150px;width:1180px;height:4px;background:#e9e9e9;"></div>
<div style="position:absolute;left:0px;top:169px;width:15.5px;height:582.6px;background:#e6e6e6;"></div>
<div style="position:absolute;left:15.5px;top:169px;width:1148.0px;height:582.6px;background:#fff;"></div>
<svg style="position:absolute;left:3px;top:157px;" width="10" height="10" viewBox="0 0 10 10"><path d="M9.5 0.5 V9.5 H0.5 Z" fill="#b9b9b9"/></svg>
<div style="position:absolute;left:384px;top:154.5px;width:201.39999999999998px;height:13.5px;background:#d2d2d2;"></div>
<svg style="position:absolute;left:0px;top:0px;pointer-events:none;" width="1445" height="768" viewBox="0 0 1445 768"><path d="M15.5 169 V751.6" stroke="#e3e3e3" stroke-width="1"/><path d="M79.5 169 V751.6" stroke="#e3e3e3" stroke-width="1"/><path d="M143.5 169 V751.6" stroke="#e3e3e3" stroke-width="1"/><path d="M191.5 169 V751.6" stroke="#e3e3e3" stroke-width="1"/><path d="M260.5 169 V751.6" stroke="#e3e3e3" stroke-width="1"/><path d="M324.5 169 V751.6" stroke="#e3e3e3" stroke-width="1"/><path d="M384.5 169 V751.6" stroke="#e3e3e3" stroke-width="1"/><path d="M457.5 169 V751.6" stroke="#e3e3e3" stroke-width="1"/><path d="M543.5 169 V751.6" stroke="#e3e3e3" stroke-width="1"/><path d="M585.5 169 V751.6" stroke="#e3e3e3" stroke-width="1"/><path d="M638.5 169 V751.6" stroke="#e3e3e3" stroke-width="1"/><path d="M697.5 169 V751.6" stroke="#e3e3e3" stroke-width="1"/><path d="M755.5 169 V751.6" stroke="#e3e3e3" stroke-width="1"/><path d="M825.5 169 V751.6" stroke="#e3e3e3" stroke-width="1"/><path d="M911.5 169 V751.6" stroke="#e3e3e3" stroke-width="1"/><path d="M964.5 169 V751.6" stroke="#e3e3e3" stroke-width="1"/><path d="M1011.5 169 V751.6" stroke="#e3e3e3" stroke-width="1"/><path d="M1077.5 169 V751.6" stroke="#e3e3e3" stroke-width="1"/><path d="M1127.5 169 V751.6" stroke="#e3e3e3" stroke-width="1"/><path d="M15.5 184.5 H1163.5" stroke="#e3e3e3" stroke-width="1"/><path d="M15.5 199.5 H1163.5" stroke="#e3e3e3" stroke-width="1"/><path d="M15.5 214.5 H1163.5" stroke="#e3e3e3" stroke-width="1"/><path d="M15.5 229.5 H1163.5" stroke="#e3e3e3" stroke-width="1"/><path d="M15.5 244.5 H1163.5" stroke="#e3e3e3" stroke-width="1"/><path d="M15.5 259.5 H1163.5" stroke="#e3e3e3" stroke-width="1"/><path d="M15.5 274.5 H1163.5" stroke="#e3e3e3" stroke-width="1"/><path d="M15.5 289.5 H1163.5" stroke="#e3e3e3" stroke-width="1"/><path d="M15.5 304.5 H1163.5" stroke="#e3e3e3" stroke-width="1"/><path d="M15.5 319.5 H1163.5" stroke="#e3e3e3" stroke-width="1"/><path d="M15.5 334.5 H1163.5" stroke="#e3e3e3" stroke-width="1"/><path d="M15.5 349.5 H1163.5" stroke="#e3e3e3" stroke-width="1"/><path d="M15.5 364.5 H1163.5" stroke="#e3e3e3" stroke-width="1"/><path d="M15.5 379.5 H1163.5" stroke="#e3e3e3" stroke-width="1"/><path d="M15.5 395.5 H1163.5" stroke="#e3e3e3" stroke-width="1"/><path d="M15.5 410.5 H1163.5" stroke="#e3e3e3" stroke-width="1"/><path d="M15.5 425.5 H1163.5" stroke="#e3e3e3" stroke-width="1"/><path d="M15.5 440.5 H1163.5" stroke="#e3e3e3" stroke-width="1"/><path d="M15.5 455.5 H1163.5" stroke="#e3e3e3" stroke-width="1"/><path d="M15.5 470.5 H1163.5" stroke="#e3e3e3" stroke-width="1"/><path d="M15.5 485.5 H1163.5" stroke="#e3e3e3" stroke-width="1"/><path d="M15.5 500.5 H1163.5" stroke="#e3e3e3" stroke-width="1"/><path d="M15.5 515.5 H1163.5" stroke="#e3e3e3" stroke-width="1"/><path d="M15.5 530.5 H1163.5" stroke="#e3e3e3" stroke-width="1"/><path d="M15.5 545.5 H1163.5" stroke="#e3e3e3" stroke-width="1"/><path d="M15.5 560.5 H1163.5" stroke="#e3e3e3" stroke-width="1"/><path d="M15.5 575.5 H1163.5" stroke="#e3e3e3" stroke-width="1"/><path d="M15.5 590.5 H1163.5" stroke="#e3e3e3" stroke-width="1"/><path d="M15.5 606.5 H1163.5" stroke="#e3e3e3" stroke-width="1"/><path d="M15.5 621.5 H1163.5" stroke="#e3e3e3" stroke-width="1"/><path d="M15.5 636.5 H1163.5" stroke="#e3e3e3" stroke-width="1"/><path d="M15.5 651.5 H1163.5" stroke="#e3e3e3" stroke-width="1"/><path d="M15.5 666.5 H1163.5" stroke="#e3e3e3" stroke-width="1"/><path d="M15.5 681.5 H1163.5" stroke="#e3e3e3" stroke-width="1"/><path d="M15.5 696.5 H1163.5" stroke="#e3e3e3" stroke-width="1"/><path d="M15.5 711.5 H1163.5" stroke="#e3e3e3" stroke-width="1"/><path d="M15.5 726.5 H1163.5" stroke="#e3e3e3" stroke-width="1"/><path d="M15.5 741.5 H1163.5" stroke="#e3e3e3" stroke-width="1"/></svg>
<svg style="position:absolute;left:0px;top:0px;pointer-events:none;" width="1445" height="768" viewBox="0 0 1445 768"><path d="M15.5 155 V168" stroke="#c6c6c6" stroke-width="1"/><path d="M79.5 155 V168" stroke="#c6c6c6" stroke-width="1"/><path d="M143.5 155 V168" stroke="#c6c6c6" stroke-width="1"/><path d="M191.5 155 V168" stroke="#c6c6c6" stroke-width="1"/><path d="M260.5 155 V168" stroke="#c6c6c6" stroke-width="1"/><path d="M324.5 155 V168" stroke="#c6c6c6" stroke-width="1"/><path d="M384.5 155 V168" stroke="#c6c6c6" stroke-width="1"/><path d="M457.5 155 V168" stroke="#c6c6c6" stroke-width="1"/><path d="M543.5 155 V168" stroke="#c6c6c6" stroke-width="1"/><path d="M585.5 155 V168" stroke="#c6c6c6" stroke-width="1"/><path d="M638.5 155 V168" stroke="#c6c6c6" stroke-width="1"/><path d="M697.5 155 V168" stroke="#c6c6c6" stroke-width="1"/><path d="M755.5 155 V168" stroke="#c6c6c6" stroke-width="1"/><path d="M825.5 155 V168" stroke="#c6c6c6" stroke-width="1"/><path d="M911.5 155 V168" stroke="#c6c6c6" stroke-width="1"/><path d="M964.5 155 V168" stroke="#c6c6c6" stroke-width="1"/><path d="M1011.5 155 V168" stroke="#c6c6c6" stroke-width="1"/><path d="M1077.5 155 V168" stroke="#c6c6c6" stroke-width="1"/><path d="M1127.5 155 V168" stroke="#c6c6c6" stroke-width="1"/><path d="M0 168.5 H1163.5" stroke="#bdbdbd" stroke-width="1"/><path d="M0 184.5 H15.5" stroke="#cfcfcf" stroke-width="1"/><path d="M0 199.5 H15.5" stroke="#cfcfcf" stroke-width="1"/><path d="M0 214.5 H15.5" stroke="#cfcfcf" stroke-width="1"/><path d="M0 229.5 H15.5" stroke="#cfcfcf" stroke-width="1"/><path d="M0 244.5 H15.5" stroke="#cfcfcf" stroke-width="1"/><path d="M0 259.5 H15.5" stroke="#cfcfcf" stroke-width="1"/><path d="M0 274.5 H15.5" stroke="#cfcfcf" stroke-width="1"/><path d="M0 289.5 H15.5" stroke="#cfcfcf" stroke-width="1"/><path d="M0 304.5 H15.5" stroke="#cfcfcf" stroke-width="1"/><path d="M0 319.5 H15.5" stroke="#cfcfcf" stroke-width="1"/><path d="M0 334.5 H15.5" stroke="#cfcfcf" stroke-width="1"/><path d="M0 349.5 H15.5" stroke="#cfcfcf" stroke-width="1"/><path d="M0 364.5 H15.5" stroke="#cfcfcf" stroke-width="1"/><path d="M0 379.5 H15.5" stroke="#cfcfcf" stroke-width="1"/><path d="M0 395.5 H15.5" stroke="#cfcfcf" stroke-width="1"/><path d="M0 410.5 H15.5" stroke="#cfcfcf" stroke-width="1"/><path d="M0 425.5 H15.5" stroke="#cfcfcf" stroke-width="1"/><path d="M0 440.5 H15.5" stroke="#cfcfcf" stroke-width="1"/><path d="M0 455.5 H15.5" stroke="#cfcfcf" stroke-width="1"/><path d="M0 470.5 H15.5" stroke="#cfcfcf" stroke-width="1"/><path d="M0 485.5 H15.5" stroke="#cfcfcf" stroke-width="1"/><path d="M0 500.5 H15.5" stroke="#cfcfcf" stroke-width="1"/><path d="M0 515.5 H15.5" stroke="#cfcfcf" stroke-width="1"/><path d="M0 530.5 H15.5" stroke="#cfcfcf" stroke-width="1"/><path d="M0 545.5 H15.5" stroke="#cfcfcf" stroke-width="1"/><path d="M0 560.5 H15.5" stroke="#cfcfcf" stroke-width="1"/><path d="M0 575.5 H15.5" stroke="#cfcfcf" stroke-width="1"/><path d="M0 590.5 H15.5" stroke="#cfcfcf" stroke-width="1"/><path d="M0 606.5 H15.5" stroke="#cfcfcf" stroke-width="1"/><path d="M0 621.5 H15.5" stroke="#cfcfcf" stroke-width="1"/><path d="M0 636.5 H15.5" stroke="#cfcfcf" stroke-width="1"/><path d="M0 651.5 H15.5" stroke="#cfcfcf" stroke-width="1"/><path d="M0 666.5 H15.5" stroke="#cfcfcf" stroke-width="1"/><path d="M0 681.5 H15.5" stroke="#cfcfcf" stroke-width="1"/><path d="M0 696.5 H15.5" stroke="#cfcfcf" stroke-width="1"/><path d="M0 711.5 H15.5" stroke="#cfcfcf" stroke-width="1"/><path d="M0 726.5 H15.5" stroke="#cfcfcf" stroke-width="1"/><path d="M0 741.5 H15.5" stroke="#cfcfcf" stroke-width="1"/><path d="M0 756.5 H15.5" stroke="#cfcfcf" stroke-width="1"/><path d="M15.5 169 V751.6" stroke="#c6c6c6" stroke-width="1"/></svg>
<div style="position:absolute;left:27.50px;width:40px;text-align:center;top:154.50px;line-height:14px;font-size:9.9px;color:#444;font-weight:normal;white-space:nowrap;">A</div>
<div style="position:absolute;left:91.50px;width:40px;text-align:center;top:154.50px;line-height:14px;font-size:9.9px;color:#444;font-weight:normal;white-space:nowrap;">B</div>
<div style="position:absolute;left:147.40px;width:40px;text-align:center;top:154.50px;line-height:14px;font-size:9.9px;color:#444;font-weight:normal;white-space:nowrap;">C</div>
<div style="position:absolute;left:205.75px;width:40px;text-align:center;top:154.50px;line-height:14px;font-size:9.9px;color:#444;font-weight:normal;white-space:nowrap;">D</div>
<div style="position:absolute;left:272.30px;width:40px;text-align:center;top:154.50px;line-height:14px;font-size:9.9px;color:#444;font-weight:normal;white-space:nowrap;">E</div>
<div style="position:absolute;left:334.20px;width:40px;text-align:center;top:154.50px;line-height:14px;font-size:9.9px;color:#444;font-weight:normal;white-space:nowrap;">F</div>
<div style="position:absolute;left:400.75px;width:40px;text-align:center;top:154.50px;line-height:14px;font-size:9.9px;color:#217346;font-weight:normal;white-space:nowrap;">G</div>
<div style="position:absolute;left:480.40px;width:40px;text-align:center;top:154.50px;line-height:14px;font-size:9.9px;color:#217346;font-weight:normal;white-space:nowrap;">H</div>
<div style="position:absolute;left:544.35px;width:40px;text-align:center;top:154.50px;line-height:14px;font-size:9.9px;color:#217346;font-weight:normal;white-space:nowrap;">I</div>
<div style="position:absolute;left:591.85px;width:40px;text-align:center;top:154.50px;line-height:14px;font-size:9.9px;color:#444;font-weight:normal;white-space:nowrap;">J</div>
<div style="position:absolute;left:648.05px;width:40px;text-align:center;top:154.50px;line-height:14px;font-size:9.9px;color:#444;font-weight:normal;white-space:nowrap;">K</div>
<div style="position:absolute;left:706.80px;width:40px;text-align:center;top:154.50px;line-height:14px;font-size:9.9px;color:#444;font-weight:normal;white-space:nowrap;">L</div>
<div style="position:absolute;left:770.50px;width:40px;text-align:center;top:154.50px;line-height:14px;font-size:9.9px;color:#444;font-weight:normal;white-space:nowrap;">M</div>
<div style="position:absolute;left:848.30px;width:40px;text-align:center;top:154.50px;line-height:14px;font-size:9.9px;color:#444;font-weight:normal;white-space:nowrap;">N</div>
<div style="position:absolute;left:917.75px;width:40px;text-align:center;top:154.50px;line-height:14px;font-size:9.9px;color:#444;font-weight:normal;white-space:nowrap;">O</div>
<div style="position:absolute;left:967.70px;width:40px;text-align:center;top:154.50px;line-height:14px;font-size:9.9px;color:#444;font-weight:normal;white-space:nowrap;">P</div>
<div style="position:absolute;left:1024.30px;width:40px;text-align:center;top:154.50px;line-height:14px;font-size:9.9px;color:#444;font-weight:normal;white-space:nowrap;">Q</div>
<div style="position:absolute;left:1082.15px;width:40px;text-align:center;top:154.50px;line-height:14px;font-size:9.9px;color:#444;font-weight:normal;white-space:nowrap;">R</div>
<div style="position:absolute;left:1130.00px;width:40px;text-align:center;top:154.50px;line-height:14px;font-size:9.9px;color:#444;font-weight:normal;white-space:nowrap;">S</div>
<div style="position:absolute;left:384px;top:167.5px;width:201.39999999999998px;height:2px;background:#217346;"></div>
<div style="position:absolute;left:0px;top:651.24px;width:15.5px;height:60.27999999999997px;background:#d2d2d2;"></div>
<div style="position:absolute;left:-3.40px;width:20px;text-align:center;top:170.00px;line-height:14px;font-size:9.8px;color:#444;font-weight:normal;white-space:nowrap;letter-spacing:-0.2px;">1</div>
<div style="position:absolute;left:-3.40px;width:20px;text-align:center;top:185.07px;line-height:14px;font-size:9.8px;color:#444;font-weight:normal;white-space:nowrap;letter-spacing:-0.2px;">2</div>
<div style="position:absolute;left:-3.40px;width:20px;text-align:center;top:200.14px;line-height:14px;font-size:9.8px;color:#444;font-weight:normal;white-space:nowrap;letter-spacing:-0.2px;">3</div>
<div style="position:absolute;left:-3.40px;width:20px;text-align:center;top:215.21px;line-height:14px;font-size:9.8px;color:#444;font-weight:normal;white-space:nowrap;letter-spacing:-0.2px;">4</div>
<div style="position:absolute;left:-3.40px;width:20px;text-align:center;top:230.28px;line-height:14px;font-size:9.8px;color:#444;font-weight:normal;white-space:nowrap;letter-spacing:-0.2px;">5</div>
<div style="position:absolute;left:-3.40px;width:20px;text-align:center;top:245.35px;line-height:14px;font-size:9.8px;color:#444;font-weight:normal;white-space:nowrap;letter-spacing:-0.2px;">6</div>
<div style="position:absolute;left:-3.40px;width:20px;text-align:center;top:260.42px;line-height:14px;font-size:9.8px;color:#444;font-weight:normal;white-space:nowrap;letter-spacing:-0.2px;">7</div>
<div style="position:absolute;left:-3.40px;width:20px;text-align:center;top:275.49px;line-height:14px;font-size:9.8px;color:#444;font-weight:normal;white-space:nowrap;letter-spacing:-0.2px;">8</div>
<div style="position:absolute;left:-3.40px;width:20px;text-align:center;top:290.56px;line-height:14px;font-size:9.8px;color:#444;font-weight:normal;white-space:nowrap;letter-spacing:-0.2px;">9</div>
<div style="position:absolute;left:-3.40px;width:20px;text-align:center;top:305.63px;line-height:14px;font-size:9.8px;color:#444;font-weight:normal;white-space:nowrap;letter-spacing:-0.2px;">10</div>
<div style="position:absolute;left:-3.40px;width:20px;text-align:center;top:320.70px;line-height:14px;font-size:9.8px;color:#444;font-weight:normal;white-space:nowrap;letter-spacing:-0.2px;">11</div>
<div style="position:absolute;left:-3.40px;width:20px;text-align:center;top:335.77px;line-height:14px;font-size:9.8px;color:#444;font-weight:normal;white-space:nowrap;letter-spacing:-0.2px;">12</div>
<div style="position:absolute;left:-3.40px;width:20px;text-align:center;top:350.84px;line-height:14px;font-size:9.8px;color:#444;font-weight:normal;white-space:nowrap;letter-spacing:-0.2px;">13</div>
<div style="position:absolute;left:-3.40px;width:20px;text-align:center;top:365.91px;line-height:14px;font-size:9.8px;color:#444;font-weight:normal;white-space:nowrap;letter-spacing:-0.2px;">14</div>
<div style="position:absolute;left:-3.40px;width:20px;text-align:center;top:380.98px;line-height:14px;font-size:9.8px;color:#444;font-weight:normal;white-space:nowrap;letter-spacing:-0.2px;">15</div>
<div style="position:absolute;left:-3.40px;width:20px;text-align:center;top:396.05px;line-height:14px;font-size:9.8px;color:#444;font-weight:normal;white-space:nowrap;letter-spacing:-0.2px;">16</div>
<div style="position:absolute;left:-3.40px;width:20px;text-align:center;top:411.12px;line-height:14px;font-size:9.8px;color:#444;font-weight:normal;white-space:nowrap;letter-spacing:-0.2px;">17</div>
<div style="position:absolute;left:-3.40px;width:20px;text-align:center;top:426.19px;line-height:14px;font-size:9.8px;color:#444;font-weight:normal;white-space:nowrap;letter-spacing:-0.2px;">18</div>
<div style="position:absolute;left:-3.40px;width:20px;text-align:center;top:441.26px;line-height:14px;font-size:9.8px;color:#444;font-weight:normal;white-space:nowrap;letter-spacing:-0.2px;">19</div>
<div style="position:absolute;left:-3.40px;width:20px;text-align:center;top:456.33px;line-height:14px;font-size:9.8px;color:#444;font-weight:normal;white-space:nowrap;letter-spacing:-0.2px;">20</div>
<div style="position:absolute;left:-3.40px;width:20px;text-align:center;top:471.40px;line-height:14px;font-size:9.8px;color:#444;font-weight:normal;white-space:nowrap;letter-spacing:-0.2px;">21</div>
<div style="position:absolute;left:-3.40px;width:20px;text-align:center;top:486.47px;line-height:14px;font-size:9.8px;color:#444;font-weight:normal;white-space:nowrap;letter-spacing:-0.2px;">22</div>
<div style="position:absolute;left:-3.40px;width:20px;text-align:center;top:501.54px;line-height:14px;font-size:9.8px;color:#444;font-weight:normal;white-space:nowrap;letter-spacing:-0.2px;">23</div>
<div style="position:absolute;left:-3.40px;width:20px;text-align:center;top:516.61px;line-height:14px;font-size:9.8px;color:#444;font-weight:normal;white-space:nowrap;letter-spacing:-0.2px;">24</div>
<div style="position:absolute;left:-3.40px;width:20px;text-align:center;top:531.68px;line-height:14px;font-size:9.8px;color:#444;font-weight:normal;white-space:nowrap;letter-spacing:-0.2px;">25</div>
<div style="position:absolute;left:-3.40px;width:20px;text-align:center;top:546.75px;line-height:14px;font-size:9.8px;color:#444;font-weight:normal;white-space:nowrap;letter-spacing:-0.2px;">26</div>
<div style="position:absolute;left:-3.40px;width:20px;text-align:center;top:561.82px;line-height:14px;font-size:9.8px;color:#444;font-weight:normal;white-space:nowrap;letter-spacing:-0.2px;">27</div>
<div style="position:absolute;left:-3.40px;width:20px;text-align:center;top:576.89px;line-height:14px;font-size:9.8px;color:#444;font-weight:normal;white-space:nowrap;letter-spacing:-0.2px;">28</div>
<div style="position:absolute;left:-3.40px;width:20px;text-align:center;top:591.96px;line-height:14px;font-size:9.8px;color:#444;font-weight:normal;white-space:nowrap;letter-spacing:-0.2px;">29</div>
<div style="position:absolute;left:-3.40px;width:20px;text-align:center;top:607.03px;line-height:14px;font-size:9.8px;color:#444;font-weight:normal;white-space:nowrap;letter-spacing:-0.2px;">30</div>
<div style="position:absolute;left:-3.40px;width:20px;text-align:center;top:622.10px;line-height:14px;font-size:9.8px;color:#444;font-weight:normal;white-space:nowrap;letter-spacing:-0.2px;">31</div>
<div style="position:absolute;left:-3.40px;width:20px;text-align:center;top:637.17px;line-height:14px;font-size:9.8px;color:#444;font-weight:normal;white-space:nowrap;letter-spacing:-0.2px;">32</div>
<div style="position:absolute;left:-3.40px;width:20px;text-align:center;top:652.24px;line-height:14px;font-size:9.8px;color:#217346;font-weight:normal;white-space:nowrap;letter-spacing:-0.2px;">33</div>
<div style="position:absolute;left:-3.40px;width:20px;text-align:center;top:667.31px;line-height:14px;font-size:9.8px;color:#217346;font-weight:normal;white-space:nowrap;letter-spacing:-0.2px;">34</div>
<div style="position:absolute;left:-3.40px;width:20px;text-align:center;top:682.38px;line-height:14px;font-size:9.8px;color:#217346;font-weight:normal;white-space:nowrap;letter-spacing:-0.2px;">35</div>
<div style="position:absolute;left:-3.40px;width:20px;text-align:center;top:697.45px;line-height:14px;font-size:9.8px;color:#217346;font-weight:normal;white-space:nowrap;letter-spacing:-0.2px;">36</div>
<div style="position:absolute;left:-3.40px;width:20px;text-align:center;top:712.52px;line-height:14px;font-size:9.8px;color:#444;font-weight:normal;white-space:nowrap;letter-spacing:-0.2px;">37</div>
<div style="position:absolute;left:-3.40px;width:20px;text-align:center;top:727.59px;line-height:14px;font-size:9.8px;color:#444;font-weight:normal;white-space:nowrap;letter-spacing:-0.2px;">38</div>
<div style="position:absolute;left:-3.40px;width:20px;text-align:center;top:742.66px;line-height:14px;font-size:9.8px;color:#444;font-weight:normal;white-space:nowrap;letter-spacing:-0.2px;">39</div>
<div style="position:absolute;left:14px;top:651.24px;width:2px;height:60.27999999999997px;background:#217346;"></div>
<div style="position:absolute;left:16.0px;top:199.14px;width:63.5px;height:30.640000000000015px;background:#fff;"></div>
<div style="position:absolute;left:16.0px;top:244.35px;width:127.5px;height:105.99000000000004px;background:#fff;"></div>
<div style="position:absolute;left:16.0px;top:379.98px;width:127.5px;height:90.91999999999996px;background:#fff;"></div>
<div style="position:absolute;left:191.8px;top:199.14px;width:132.59999999999997px;height:75.85000000000002px;background:#fff;"></div>
<div style="position:absolute;left:191.8px;top:304.63px;width:132.59999999999997px;height:256.68999999999994px;background:#fff;"></div>
<div style="position:absolute;left:384.5px;top:199.14px;width:313.29999999999995px;height:181.34000000000003px;background:#fff;"></div>
<div style="position:absolute;left:384.5px;top:410.12px;width:200.89999999999998px;height:90.92000000000002px;background:#fff;"></div>
<div style="position:absolute;left:384.5px;top:530.6800000000001px;width:200.89999999999998px;height:196.40999999999997px;background:#fff;"></div>
<div style="position:absolute;left:756.3px;top:199.14px;width:407.20000000000005px;height:136.13px;background:#fff;"></div>
<div style="position:absolute;left:756.3px;top:349.84000000000003px;width:155.10000000000002px;height:15.569999999999936px;background:#fff;"></div>
<div style="position:absolute;left:756.3px;top:379.98px;width:155.10000000000002px;height:90.91999999999996px;background:#fff;"></div>
<div style="position:absolute;left:585px;top:411.12px;width:2px;height:13.569999999999993px;background:#fff;"></div>
<div style="position:absolute;left:585px;top:531.6800000000001px;width:2px;height:13.569999999999936px;background:#fff;"></div>
<div style="position:absolute;left:15.5px;top:199.14px;width:64.5px;height:15.570000000000022px;background:#dce6f1;"></div>
<div style="position:absolute;left:15.5px;top:213.71px;width:64.0px;height:1px;background:#b2c6dd;"></div>
<div style="position:absolute;left:17.50px;top:200.84px;width:62.00px;overflow:hidden;line-height:14px;font-size:10px;font-weight:bold;color:#1c1c1c;white-space:nowrap"><span class="cb" style="display:inline-block;transform:scaleX(0.94);transform-origin:0 50%">Sum of Sales</span></div>
<div style="position:absolute;left:15.50px;top:215.91px;width:62.00px;overflow:hidden;text-align:right;line-height:14px;font-size:10px;font-weight:normal;color:#1c1c1c;white-space:nowrap"><span class="c" style="display:inline-block;transform:scaleX(0.945);transform-origin:100% 50%">3254576.95</span></div>
<div style="position:absolute;left:15.5px;top:244.35px;width:128.5px;height:15.570000000000022px;background:#dce6f1;"></div>
<div style="position:absolute;left:15.5px;top:258.92px;width:128.0px;height:1px;background:#b2c6dd;"></div>
<div style="position:absolute;left:17.50px;top:246.05px;width:49.00px;overflow:hidden;line-height:14px;font-size:10px;font-weight:bold;color:#1c1c1c;white-space:nowrap"><span class="cb" style="display:inline-block;transform:scaleX(0.94);transform-origin:0 50%">Row Labels</span></div>
<svg style="position:absolute;left:66.5px;top:246.35px;" width="12" height="12" viewBox="0 0 12 12"><rect x="0.5" y="0.5" width="11" height="11" fill="#f7f7f7" stroke="#c8c8c8"/><path d="M3.5 5 H8.5 L6 7.5 Z" fill="#6b6b6b"/></svg>
<div style="position:absolute;left:81.50px;top:246.05px;width:62.00px;overflow:hidden;line-height:14px;font-size:10px;font-weight:bold;color:#1c1c1c;white-space:nowrap"><span class="cb" style="display:inline-block;transform:scaleX(0.94);transform-origin:0 50%">Sum of Sales</span></div>
<div style="position:absolute;left:17.50px;top:261.12px;width:62.00px;overflow:hidden;line-height:14px;font-size:10px;font-weight:normal;color:#1c1c1c;white-space:nowrap"><span class="c" style="display:inline-block;transform:scaleX(1.02);transform-origin:0 50%">Gonzales</span></div>
<div style="position:absolute;left:79.50px;top:261.12px;width:62.00px;overflow:hidden;text-align:right;line-height:14px;font-size:10px;font-weight:normal;color:#1c1c1c;white-space:nowrap"><span class="c" style="display:inline-block;transform:scaleX(0.945);transform-origin:100% 50%">505968.95</span></div>
<div style="position:absolute;left:17.50px;top:276.19px;width:62.00px;overflow:hidden;line-height:14px;font-size:10px;font-weight:normal;color:#1c1c1c;white-space:nowrap"><span class="c" style="display:inline-block;transform:scaleX(1.02);transform-origin:0 50%">Jones</span></div>
<div style="position:absolute;left:79.50px;top:276.19px;width:62.00px;overflow:hidden;text-align:right;line-height:14px;font-size:10px;font-weight:normal;color:#1c1c1c;white-space:nowrap"><span class="c" style="display:inline-block;transform:scaleX(0.945);transform-origin:100% 50%">650976.9</span></div>
<div style="position:absolute;left:17.50px;top:291.26px;width:62.00px;overflow:hidden;line-height:14px;font-size:10px;font-weight:normal;color:#1c1c1c;white-space:nowrap"><span class="c" style="display:inline-block;transform:scaleX(1.02);transform-origin:0 50%">McLearley</span></div>
<div style="position:absolute;left:79.50px;top:291.26px;width:62.00px;overflow:hidden;text-align:right;line-height:14px;font-size:10px;font-weight:normal;color:#1c1c1c;white-space:nowrap"><span class="c" style="display:inline-block;transform:scaleX(0.945);transform-origin:100% 50%">740578.4</span></div>
<div style="position:absolute;left:17.50px;top:306.33px;width:62.00px;overflow:hidden;line-height:14px;font-size:10px;font-weight:normal;color:#1c1c1c;white-space:nowrap"><span class="c" style="display:inline-block;transform:scaleX(1.02);transform-origin:0 50%">Robertson</span></div>
<div style="position:absolute;left:79.50px;top:306.33px;width:62.00px;overflow:hidden;text-align:right;line-height:14px;font-size:10px;font-weight:normal;color:#1c1c1c;white-space:nowrap"><span class="c" style="display:inline-block;transform:scaleX(0.945);transform-origin:100% 50%">596929.9</span></div>
<div style="position:absolute;left:17.50px;top:321.40px;width:62.00px;overflow:hidden;line-height:14px;font-size:10px;font-weight:normal;color:#1c1c1c;white-space:nowrap"><span class="c" style="display:inline-block;transform:scaleX(1.02);transform-origin:0 50%">Smith</span></div>
<div style="position:absolute;left:79.50px;top:321.40px;width:62.00px;overflow:hidden;text-align:right;line-height:14px;font-size:10px;font-weight:normal;color:#1c1c1c;white-space:nowrap"><span class="c" style="display:inline-block;transform:scaleX(0.945);transform-origin:100% 50%">760122.8</span></div>
<div style="position:absolute;left:15.5px;top:334.77px;width:128.5px;height:15.57000000000005px;background:#dce6f1;"></div>
<div style="position:absolute;left:15.5px;top:334.27px;width:128.0px;height:1px;background:#b2c6dd;"></div>
<div style="position:absolute;left:17.50px;top:336.47px;width:62.00px;overflow:hidden;line-height:14px;font-size:10px;font-weight:bold;color:#1c1c1c;white-space:nowrap"><span class="cb" style="display:inline-block;transform:scaleX(0.94);transform-origin:0 50%">Grand Total</span></div>
<div style="position:absolute;left:79.50px;top:336.47px;width:62.00px;overflow:hidden;text-align:right;line-height:14px;font-size:10px;font-weight:bold;color:#1c1c1c;white-space:nowrap"><span class="cb" style="display:inline-block;transform:scaleX(0.945);transform-origin:100% 50%">3254576.95</span></div>
<div style="position:absolute;left:15.5px;top:379.98px;width:128.5px;height:15.569999999999993px;background:#dce6f1;"></div>
<div style="position:absolute;left:15.5px;top:394.55px;width:128.0px;height:1px;background:#b2c6dd;"></div>
<div style="position:absolute;left:17.50px;top:381.68px;width:49.00px;overflow:hidden;line-height:14px;font-size:10px;font-weight:bold;color:#1c1c1c;white-space:nowrap"><span class="cb" style="display:inline-block;transform:scaleX(0.94);transform-origin:0 50%">Row Labels</span></div>
<svg style="position:absolute;left:66.5px;top:381.98px;" width="12" height="12" viewBox="0 0 12 12"><rect x="0.5" y="0.5" width="11" height="11" fill="#f7f7f7" stroke="#c8c8c8"/><path d="M3.5 5 H8.5 L6 7.5 Z" fill="#6b6b6b"/></svg>
<div style="position:absolute;left:81.50px;top:381.68px;width:62.00px;overflow:hidden;line-height:14px;font-size:10px;font-weight:bold;color:#1c1c1c;white-space:nowrap"><span class="cb" style="display:inline-block;transform:scaleX(0.94);transform-origin:0 50%">Sum of Sales</span></div>
<div style="position:absolute;left:17.50px;top:396.75px;width:62.00px;overflow:hidden;line-height:14px;font-size:10px;font-weight:normal;color:#1c1c1c;white-space:nowrap"><span class="c" style="display:inline-block;transform:scaleX(1.02);transform-origin:0 50%">Central</span></div>
<div style="position:absolute;left:79.50px;top:396.75px;width:62.00px;overflow:hidden;text-align:right;line-height:14px;font-size:10px;font-weight:normal;color:#1c1c1c;white-space:nowrap"><span class="c" style="display:inline-block;transform:scaleX(0.945);transform-origin:100% 50%">1391555.3</span></div>
<div style="position:absolute;left:17.50px;top:411.82px;width:62.00px;overflow:hidden;line-height:14px;font-size:10px;font-weight:normal;color:#1c1c1c;white-space:nowrap"><span class="c" style="display:inline-block;transform:scaleX(1.02);transform-origin:0 50%">North</span></div>
<div style="position:absolute;left:79.50px;top:411.82px;width:62.00px;overflow:hidden;text-align:right;line-height:14px;font-size:10px;font-weight:normal;color:#1c1c1c;white-space:nowrap"><span class="c" style="display:inline-block;transform:scaleX(0.945);transform-origin:100% 50%">760122.8</span></div>
<div style="position:absolute;left:17.50px;top:426.89px;width:62.00px;overflow:hidden;line-height:14px;font-size:10px;font-weight:normal;color:#1c1c1c;white-space:nowrap"><span class="c" style="display:inline-block;transform:scaleX(1.02);transform-origin:0 50%">South</span></div>
<div style="position:absolute;left:79.50px;top:426.89px;width:62.00px;overflow:hidden;text-align:right;line-height:14px;font-size:10px;font-weight:normal;color:#1c1c1c;white-space:nowrap"><span class="c" style="display:inline-block;transform:scaleX(0.945);transform-origin:100% 50%">505968.95</span></div>
<div style="position:absolute;left:17.50px;top:441.96px;width:62.00px;overflow:hidden;line-height:14px;font-size:10px;font-weight:normal;color:#1c1c1c;white-space:nowrap"><span class="c" style="display:inline-block;transform:scaleX(1.02);transform-origin:0 50%">West</span></div>
<div style="position:absolute;left:79.50px;top:441.96px;width:62.00px;overflow:hidden;text-align:right;line-height:14px;font-size:10px;font-weight:normal;color:#1c1c1c;white-space:nowrap"><span class="c" style="display:inline-block;transform:scaleX(0.945);transform-origin:100% 50%">596929.9</span></div>
<div style="position:absolute;left:15.5px;top:455.33px;width:128.5px;height:15.569999999999993px;background:#dce6f1;"></div>
<div style="position:absolute;left:15.5px;top:454.83px;width:128.0px;height:1px;background:#b2c6dd;"></div>
<div style="position:absolute;left:17.50px;top:457.03px;width:62.00px;overflow:hidden;line-height:14px;font-size:10px;font-weight:bold;color:#1c1c1c;white-space:nowrap"><span class="cb" style="display:inline-block;transform:scaleX(0.94);transform-origin:0 50%">Grand Total</span></div>
<div style="position:absolute;left:79.50px;top:457.03px;width:62.00px;overflow:hidden;text-align:right;line-height:14px;font-size:10px;font-weight:bold;color:#1c1c1c;white-space:nowrap"><span class="cb" style="display:inline-block;transform:scaleX(0.945);transform-origin:100% 50%">3254576.95</span></div>
<div style="position:absolute;left:191.3px;top:199.14px;width:133.59999999999997px;height:15.570000000000022px;background:#dce6f1;"></div>
<div style="position:absolute;left:191.3px;top:213.71px;width:133.09999999999997px;height:1px;background:#b2c6dd;"></div>
<div style="position:absolute;left:193.30px;top:200.84px;width:53.90px;overflow:hidden;line-height:14px;font-size:10px;font-weight:bold;color:#1c1c1c;white-space:nowrap"><span class="cb" style="display:inline-block;transform:scaleX(0.94);transform-origin:0 50%">Row Labels</span></div>
<svg style="position:absolute;left:247.2px;top:201.14px;" width="12" height="12" viewBox="0 0 12 12"><rect x="0.5" y="0.5" width="11" height="11" fill="#f7f7f7" stroke="#c8c8c8"/><path d="M3.5 5 H8.5 L6 7.5 Z" fill="#6b6b6b"/></svg>
<div style="position:absolute;left:262.20px;top:200.84px;width:62.20px;overflow:hidden;line-height:14px;font-size:10px;font-weight:bold;color:#1c1c1c;white-space:nowrap"><span class="cb" style="display:inline-block;transform:scaleX(0.94);transform-origin:0 50%">Sum of Sales</span></div>
<div style="position:absolute;left:193.30px;top:215.91px;width:66.90px;overflow:hidden;line-height:14px;font-size:10px;font-weight:normal;color:#1c1c1c;white-space:nowrap"><span class="c" style="display:inline-block;transform:scaleX(0.945);transform-origin:0 50%">2017</span></div>
<div style="position:absolute;left:260.20px;top:215.91px;width:62.20px;overflow:hidden;text-align:right;line-height:14px;font-size:10px;font-weight:normal;color:#1c1c1c;white-space:nowrap"><span class="c" style="display:inline-block;transform:scaleX(0.945);transform-origin:100% 50%">1008662.75</span></div>
<div style="position:absolute;left:193.30px;top:230.98px;width:66.90px;overflow:hidden;line-height:14px;font-size:10px;font-weight:normal;color:#1c1c1c;white-space:nowrap"><span class="c" style="display:inline-block;transform:scaleX(0.945);transform-origin:0 50%">2018</span></div>
<div style="position:absolute;left:260.20px;top:230.98px;width:62.20px;overflow:hidden;text-align:right;line-height:14px;font-size:10px;font-weight:normal;color:#1c1c1c;white-space:nowrap"><span class="c" style="display:inline-block;transform:scaleX(0.945);transform-origin:100% 50%">1138686</span></div>
<div style="position:absolute;left:193.30px;top:246.05px;width:66.90px;overflow:hidden;line-height:14px;font-size:10px;font-weight:normal;color:#1c1c1c;white-space:nowrap"><span class="c" style="display:inline-block;transform:scaleX(0.945);transform-origin:0 50%">2019</span></div>
<div style="position:absolute;left:260.20px;top:246.05px;width:62.20px;overflow:hidden;text-align:right;line-height:14px;font-size:10px;font-weight:normal;color:#1c1c1c;white-space:nowrap"><span class="c" style="display:inline-block;transform:scaleX(0.945);transform-origin:100% 50%">1107228.2</span></div>
<div style="position:absolute;left:191.3px;top:259.42px;width:133.59999999999997px;height:15.569999999999993px;background:#dce6f1;"></div>
<div style="position:absolute;left:191.3px;top:258.92px;width:133.09999999999997px;height:1px;background:#b2c6dd;"></div>
<div style="position:absolute;left:193.30px;top:261.12px;width:66.90px;overflow:hidden;line-height:14px;font-size:10px;font-weight:bold;color:#1c1c1c;white-space:nowrap"><span class="cb" style="display:inline-block;transform:scaleX(0.94);transform-origin:0 50%">Grand Total</span></div>
<div style="position:absolute;left:260.20px;top:261.12px;width:62.20px;overflow:hidden;text-align:right;line-height:14px;font-size:10px;font-weight:bold;color:#1c1c1c;white-space:nowrap"><span class="cb" style="display:inline-block;transform:scaleX(0.945);transform-origin:100% 50%">3254576.95</span></div>
<div style="position:absolute;left:191.3px;top:304.63px;width:133.59999999999997px;height:15.569999999999993px;background:#dce6f1;"></div>
<div style="position:absolute;left:191.3px;top:319.2px;width:133.09999999999997px;height:1px;background:#b2c6dd;"></div>
<div style="position:absolute;left:193.30px;top:306.33px;width:53.90px;overflow:hidden;line-height:14px;font-size:10px;font-weight:bold;color:#1c1c1c;white-space:nowrap"><span class="cb" style="display:inline-block;transform:scaleX(0.94);transform-origin:0 50%">Row Labels</span></div>
<svg style="position:absolute;left:247.2px;top:306.63px;" width="12" height="12" viewBox="0 0 12 12"><rect x="0.5" y="0.5" width="11" height="11" fill="#f7f7f7" stroke="#c8c8c8"/><path d="M3.5 5 H8.5 L6 7.5 Z" fill="#6b6b6b"/></svg>
<div style="position:absolute;left:262.20px;top:306.33px;width:62.20px;overflow:hidden;line-height:14px;font-size:10px;font-weight:bold;color:#1c1c1c;white-space:nowrap"><span class="cb" style="display:inline-block;transform:scaleX(0.94);transform-origin:0 50%">Sum of Sales</span></div>
<svg style="position:absolute;left:194.8px;top:323.9px;" width="7" height="7" viewBox="0 0 7 7"><rect x="0.5" y="0.5" width="6" height="6" rx="0.8" fill="#ececec" stroke="#a8a8a8" stroke-width="0.8"/><path d="M1.8 3.5 H5.2" stroke="#555" stroke-width="0.9"/></svg>
<div style="position:absolute;left:202.80px;top:321.40px;width:57.40px;overflow:hidden;line-height:14px;font-size:10px;font-weight:bold;color:#1c1c1c;white-space:nowrap"><span class="cb" style="display:inline-block;transform:scaleX(0.945);transform-origin:0 50%">2017</span></div>
<div style="position:absolute;left:260.20px;top:321.40px;width:62.20px;overflow:hidden;text-align:right;line-height:14px;font-size:10px;font-weight:bold;color:#1c1c1c;white-space:nowrap"><span class="cb" style="display:inline-block;transform:scaleX(0.945);transform-origin:100% 50%">1008662.75</span></div>
<div style="position:absolute;left:191.3px;top:334.27px;width:133.09999999999997px;height:1px;background:#ccdae9;"></div>
<div style="position:absolute;left:212.80px;top:336.47px;width:47.40px;overflow:hidden;line-height:14px;font-size:10px;font-weight:normal;color:#1c1c1c;white-space:nowrap"><span class="c" style="display:inline-block;transform:scaleX(1.02);transform-origin:0 50%">Central</span></div>
<div style="position:absolute;left:260.20px;top:336.47px;width:62.20px;overflow:hidden;text-align:right;line-height:14px;font-size:10px;font-weight:normal;color:#1c1c1c;white-space:nowrap"><span class="c" style="display:inline-block;transform:scaleX(0.945);transform-origin:100% 50%">435531.5</span></div>
<div style="position:absolute;left:212.80px;top:351.54px;width:47.40px;overflow:hidden;line-height:14px;font-size:10px;font-weight:normal;color:#1c1c1c;white-space:nowrap"><span class="c" style="display:inline-block;transform:scaleX(1.02);transform-origin:0 50%">North</span></div>
<div style="position:absolute;left:260.20px;top:351.54px;width:62.20px;overflow:hidden;text-align:right;line-height:14px;font-size:10px;font-weight:normal;color:#1c1c1c;white-space:nowrap"><span class="c" style="display:inline-block;transform:scaleX(0.945);transform-origin:100% 50%">232944</span></div>
<div style="position:absolute;left:212.80px;top:366.61px;width:47.40px;overflow:hidden;line-height:14px;font-size:10px;font-weight:normal;color:#1c1c1c;white-space:nowrap"><span class="c" style="display:inline-block;transform:scaleX(1.02);transform-origin:0 50%">South</span></div>
<div style="position:absolute;left:260.20px;top:366.61px;width:62.20px;overflow:hidden;text-align:right;line-height:14px;font-size:10px;font-weight:normal;color:#1c1c1c;white-space:nowrap"><span class="c" style="display:inline-block;transform:scaleX(0.945);transform-origin:100% 50%">153345.75</span></div>
<div style="position:absolute;left:212.80px;top:381.68px;width:47.40px;overflow:hidden;line-height:14px;font-size:10px;font-weight:normal;color:#1c1c1c;white-space:nowrap"><span class="c" style="display:inline-block;transform:scaleX(1.02);transform-origin:0 50%">West</span></div>
<div style="position:absolute;left:260.20px;top:381.68px;width:62.20px;overflow:hidden;text-align:right;line-height:14px;font-size:10px;font-weight:normal;color:#1c1c1c;white-space:nowrap"><span class="c" style="display:inline-block;transform:scaleX(0.945);transform-origin:100% 50%">186841.5</span></div>
<svg style="position:absolute;left:194.8px;top:399.25px;" width="7" height="7" viewBox="0 0 7 7"><rect x="0.5" y="0.5" width="6" height="6" rx="0.8" fill="#ececec" stroke="#a8a8a8" stroke-width="0.8"/><path d="M1.8 3.5 H5.2" stroke="#555" stroke-width="0.9"/></svg>
<div style="position:absolute;left:202.80px;top:396.75px;width:57.40px;overflow:hidden;line-height:14px;font-size:10px;font-weight:bold;color:#1c1c1c;white-space:nowrap"><span class="cb" style="display:inline-block;transform:scaleX(0.945);transform-origin:0 50%">2018</span></div>
<div style="position:absolute;left:260.20px;top:396.75px;width:62.20px;overflow:hidden;text-align:right;line-height:14px;font-size:10px;font-weight:bold;color:#1c1c1c;white-space:nowrap"><span class="cb" style="display:inline-block;transform:scaleX(0.945);transform-origin:100% 50%">1138686</span></div>
<div style="position:absolute;left:191.3px;top:409.62px;width:133.09999999999997px;height:1px;background:#ccdae9;"></div>
<div style="position:absolute;left:212.80px;top:411.82px;width:47.40px;overflow:hidden;line-height:14px;font-size:10px;font-weight:normal;color:#1c1c1c;white-space:nowrap"><span class="c" style="display:inline-block;transform:scaleX(1.02);transform-origin:0 50%">Central</span></div>
<div style="position:absolute;left:260.20px;top:411.82px;width:62.20px;overflow:hidden;text-align:right;line-height:14px;font-size:10px;font-weight:normal;color:#1c1c1c;white-space:nowrap"><span class="c" style="display:inline-block;transform:scaleX(0.945);transform-origin:100% 50%">483116</span></div>
<div style="position:absolute;left:212.80px;top:426.89px;width:47.40px;overflow:hidden;line-height:14px;font-size:10px;font-weight:normal;color:#1c1c1c;white-space:nowrap"><span class="c" style="display:inline-block;transform:scaleX(1.02);transform-origin:0 50%">North</span></div>
<div style="position:absolute;left:260.20px;top:426.89px;width:62.20px;overflow:hidden;text-align:right;line-height:14px;font-size:10px;font-weight:normal;color:#1c1c1c;white-space:nowrap"><span class="c" style="display:inline-block;transform:scaleX(0.945);transform-origin:100% 50%">269723</span></div>
<div style="position:absolute;left:212.80px;top:441.96px;width:47.40px;overflow:hidden;line-height:14px;font-size:10px;font-weight:normal;color:#1c1c1c;white-space:nowrap"><span class="c" style="display:inline-block;transform:scaleX(1.02);transform-origin:0 50%">South</span></div>
<div style="position:absolute;left:260.20px;top:441.96px;width:62.20px;overflow:hidden;text-align:right;line-height:14px;font-size:10px;font-weight:normal;color:#1c1c1c;white-space:nowrap"><span class="c" style="display:inline-block;transform:scaleX(0.945);transform-origin:100% 50%">180369</span></div>
<div style="position:absolute;left:212.80px;top:457.03px;width:47.40px;overflow:hidden;line-height:14px;font-size:10px;font-weight:normal;color:#1c1c1c;white-space:nowrap"><span class="c" style="display:inline-block;transform:scaleX(1.02);transform-origin:0 50%">West</span></div>
<div style="position:absolute;left:260.20px;top:457.03px;width:62.20px;overflow:hidden;text-align:right;line-height:14px;font-size:10px;font-weight:normal;color:#1c1c1c;white-space:nowrap"><span class="c" style="display:inline-block;transform:scaleX(0.945);transform-origin:100% 50%">205478</span></div>
<svg style="position:absolute;left:194.8px;top:474.59999999999997px;" width="7" height="7" viewBox="0 0 7 7"><rect x="0.5" y="0.5" width="6" height="6" rx="0.8" fill="#ececec" stroke="#a8a8a8" stroke-width="0.8"/><path d="M1.8 3.5 H5.2" stroke="#555" stroke-width="0.9"/></svg>
<div style="position:absolute;left:202.80px;top:472.10px;width:57.40px;overflow:hidden;line-height:14px;font-size:10px;font-weight:bold;color:#1c1c1c;white-space:nowrap"><span class="cb" style="display:inline-block;transform:scaleX(0.945);transform-origin:0 50%">2019</span></div>
<div style="position:absolute;left:260.20px;top:472.10px;width:62.20px;overflow:hidden;text-align:right;line-height:14px;font-size:10px;font-weight:bold;color:#1c1c1c;white-space:nowrap"><span class="cb" style="display:inline-block;transform:scaleX(0.945);transform-origin:100% 50%">1107228.2</span></div>
<div style="position:absolute;left:191.3px;top:484.97px;width:133.09999999999997px;height:1px;background:#ccdae9;"></div>
<div style="position:absolute;left:212.80px;top:487.17px;width:47.40px;overflow:hidden;line-height:14px;font-size:10px;font-weight:normal;color:#1c1c1c;white-space:nowrap"><span class="c" style="display:inline-block;transform:scaleX(1.02);transform-origin:0 50%">Central</span></div>
<div style="position:absolute;left:260.20px;top:487.17px;width:62.20px;overflow:hidden;text-align:right;line-height:14px;font-size:10px;font-weight:normal;color:#1c1c1c;white-space:nowrap"><span class="c" style="display:inline-block;transform:scaleX(0.945);transform-origin:100% 50%">472907.8</span></div>
<div style="position:absolute;left:212.80px;top:502.24px;width:47.40px;overflow:hidden;line-height:14px;font-size:10px;font-weight:normal;color:#1c1c1c;white-space:nowrap"><span class="c" style="display:inline-block;transform:scaleX(1.02);transform-origin:0 50%">North</span></div>
<div style="position:absolute;left:260.20px;top:502.24px;width:62.20px;overflow:hidden;text-align:right;line-height:14px;font-size:10px;font-weight:normal;color:#1c1c1c;white-space:nowrap"><span class="c" style="display:inline-block;transform:scaleX(0.945);transform-origin:100% 50%">257455.8</span></div>
<div style="position:absolute;left:212.80px;top:517.31px;width:47.40px;overflow:hidden;line-height:14px;font-size:10px;font-weight:normal;color:#1c1c1c;white-space:nowrap"><span class="c" style="display:inline-block;transform:scaleX(1.02);transform-origin:0 50%">South</span></div>
<div style="position:absolute;left:260.20px;top:517.31px;width:62.20px;overflow:hidden;text-align:right;line-height:14px;font-size:10px;font-weight:normal;color:#1c1c1c;white-space:nowrap"><span class="c" style="display:inline-block;transform:scaleX(0.945);transform-origin:100% 50%">172254.2</span></div>
<div style="position:absolute;left:212.80px;top:532.38px;width:47.40px;overflow:hidden;line-height:14px;font-size:10px;font-weight:normal;color:#1c1c1c;white-space:nowrap"><span class="c" style="display:inline-block;transform:scaleX(1.02);transform-origin:0 50%">West</span></div>
<div style="position:absolute;left:260.20px;top:532.38px;width:62.20px;overflow:hidden;text-align:right;line-height:14px;font-size:10px;font-weight:normal;color:#1c1c1c;white-space:nowrap"><span class="c" style="display:inline-block;transform:scaleX(0.945);transform-origin:100% 50%">204610.4</span></div>
<div style="position:absolute;left:191.3px;top:545.75px;width:133.59999999999997px;height:15.569999999999936px;background:#dce6f1;"></div>
<div style="position:absolute;left:191.3px;top:545.25px;width:133.09999999999997px;height:1px;background:#b2c6dd;"></div>
<div style="position:absolute;left:193.30px;top:547.45px;width:66.90px;overflow:hidden;line-height:14px;font-size:10px;font-weight:bold;color:#1c1c1c;white-space:nowrap"><span class="cb" style="display:inline-block;transform:scaleX(0.94);transform-origin:0 50%">Grand Total</span></div>
<div style="position:absolute;left:260.20px;top:547.45px;width:62.20px;overflow:hidden;text-align:right;line-height:14px;font-size:10px;font-weight:bold;color:#1c1c1c;white-space:nowrap"><span class="cb" style="display:inline-block;transform:scaleX(0.945);transform-origin:100% 50%">3254576.95</span></div>
<div style="position:absolute;left:384px;top:199.14px;width:314.29999999999995px;height:30.640000000000015px;background:#dce6f1;"></div>
<div style="position:absolute;left:384px;top:228.78px;width:313.79999999999995px;height:1px;background:#b2c6dd;"></div>
<div style="position:absolute;left:386.00px;top:200.84px;width:71.50px;overflow:hidden;line-height:14px;font-size:10px;font-weight:bold;color:#1c1c1c;white-space:nowrap"><span class="cb" style="display:inline-block;transform:scaleX(0.94);transform-origin:0 50%">Sum of Sales</span></div>
<div style="position:absolute;left:459.50px;top:200.84px;width:70.80px;overflow:hidden;line-height:14px;font-size:10px;font-weight:bold;color:#1c1c1c;white-space:nowrap"><span class="cb" style="display:inline-block;transform:scaleX(0.94);transform-origin:0 50%">Column Labels</span></div>
<svg style="position:absolute;left:530.3px;top:201.14px;" width="12" height="12" viewBox="0 0 12 12"><rect x="0.5" y="0.5" width="11" height="11" fill="#f7f7f7" stroke="#c8c8c8"/><path d="M3.5 5 H8.5 L6 7.5 Z" fill="#6b6b6b"/></svg>
<div style="position:absolute;left:386.00px;top:215.91px;width:58.50px;overflow:hidden;line-height:14px;font-size:10px;font-weight:bold;color:#1c1c1c;white-space:nowrap"><span class="cb" style="display:inline-block;transform:scaleX(0.94);transform-origin:0 50%">Row Labels</span></div>
<svg style="position:absolute;left:444.5px;top:216.21px;" width="12" height="12" viewBox="0 0 12 12"><rect x="0.5" y="0.5" width="11" height="11" fill="#f7f7f7" stroke="#c8c8c8"/><path d="M3.5 5 H8.5 L6 7.5 Z" fill="#6b6b6b"/></svg>
<div style="position:absolute;left:457.50px;top:215.91px;width:83.80px;overflow:hidden;text-align:right;line-height:14px;font-size:10px;font-weight:bold;color:#1c1c1c;white-space:nowrap"><span class="cb" style="display:inline-block;transform:scaleX(0.945);transform-origin:100% 50%">2017</span></div>
<div style="position:absolute;left:543.30px;top:215.91px;width:40.10px;overflow:hidden;text-align:right;line-height:14px;font-size:10px;font-weight:bold;color:#1c1c1c;white-space:nowrap"><span class="cb" style="display:inline-block;transform:scaleX(0.945);transform-origin:100% 50%">2018</span></div>
<div style="position:absolute;left:585.40px;top:215.91px;width:50.90px;overflow:hidden;text-align:right;line-height:14px;font-size:10px;font-weight:bold;color:#1c1c1c;white-space:nowrap"><span class="cb" style="display:inline-block;transform:scaleX(0.945);transform-origin:100% 50%">2019</span></div>
<div style="position:absolute;left:640.30px;top:215.91px;width:57.50px;overflow:hidden;line-height:14px;font-size:10px;font-weight:bold;color:#1c1c1c;white-space:nowrap"><span class="cb" style="display:inline-block;transform:scaleX(0.94);transform-origin:0 50%">Grand Total</span></div>
<svg style="position:absolute;left:387.5px;top:233.48px;" width="7" height="7" viewBox="0 0 7 7"><rect x="0.5" y="0.5" width="6" height="6" rx="0.8" fill="#ececec" stroke="#a8a8a8" stroke-width="0.8"/><path d="M1.8 3.5 H5.2" stroke="#555" stroke-width="0.9"/></svg>
<div style="position:absolute;left:395.50px;top:230.98px;width:62.00px;overflow:hidden;line-height:14px;font-size:10px;font-weight:bold;color:#1c1c1c;white-space:nowrap"><span class="cb" style="display:inline-block;transform:scaleX(0.94);transform-origin:0 50%">Central</span></div>
<div style="position:absolute;left:457.50px;top:230.98px;width:83.80px;overflow:hidden;text-align:right;line-height:14px;font-size:10px;font-weight:bold;color:#1c1c1c;white-space:nowrap"><span class="cb" style="display:inline-block;transform:scaleX(0.945);transform-origin:100% 50%">435531.5</span></div>
<div style="position:absolute;left:543.30px;top:230.98px;width:40.10px;overflow:hidden;text-align:right;line-height:14px;font-size:10px;font-weight:bold;color:#1c1c1c;white-space:nowrap"><span class="cb" style="display:inline-block;transform:scaleX(0.945);transform-origin:100% 50%">483116</span></div>
<div style="position:absolute;left:585.40px;top:230.98px;width:50.90px;overflow:hidden;text-align:right;line-height:14px;font-size:10px;font-weight:bold;color:#1c1c1c;white-space:nowrap"><span class="cb" style="display:inline-block;transform:scaleX(0.945);transform-origin:100% 50%">472907.8</span></div>
<div style="position:absolute;left:638.30px;top:230.98px;width:57.50px;overflow:hidden;text-align:right;line-height:14px;font-size:10px;font-weight:bold;color:#1c1c1c;white-space:nowrap"><span class="cb" style="display:inline-block;transform:scaleX(0.945);transform-origin:100% 50%">1391555.3</span></div>
<div style="position:absolute;left:384px;top:243.85px;width:313.79999999999995px;height:1px;background:#ccdae9;"></div>
<div style="position:absolute;left:405.50px;top:246.05px;width:52.00px;overflow:hidden;line-height:14px;font-size:10px;font-weight:normal;color:#1c1c1c;white-space:nowrap"><span class="c" style="display:inline-block;transform:scaleX(1.02);transform-origin:0 50%">Jones</span></div>
<div style="position:absolute;left:457.50px;top:246.05px;width:83.80px;overflow:hidden;text-align:right;line-height:14px;font-size:10px;font-weight:normal;color:#1c1c1c;white-space:nowrap"><span class="c" style="display:inline-block;transform:scaleX(0.945);transform-origin:100% 50%">199746.5</span></div>
<div style="position:absolute;left:543.30px;top:246.05px;width:40.10px;overflow:hidden;text-align:right;line-height:14px;font-size:10px;font-weight:normal;color:#1c1c1c;white-space:nowrap"><span class="c" style="display:inline-block;transform:scaleX(0.945);transform-origin:100% 50%">230340</span></div>
<div style="position:absolute;left:585.40px;top:246.05px;width:50.90px;overflow:hidden;text-align:right;line-height:14px;font-size:10px;font-weight:normal;color:#1c1c1c;white-space:nowrap"><span class="c" style="display:inline-block;transform:scaleX(0.945);transform-origin:100% 50%">220890.4</span></div>
<div style="position:absolute;left:638.30px;top:246.05px;width:57.50px;overflow:hidden;text-align:right;line-height:14px;font-size:10px;font-weight:normal;color:#1c1c1c;white-space:nowrap"><span class="c" style="display:inline-block;transform:scaleX(0.945);transform-origin:100% 50%">650976.9</span></div>
<div style="position:absolute;left:405.50px;top:261.12px;width:52.00px;overflow:hidden;line-height:14px;font-size:10px;font-weight:normal;color:#1c1c1c;white-space:nowrap"><span class="c" style="display:inline-block;transform:scaleX(1.02);transform-origin:0 50%">McLearley</span></div>
<div style="position:absolute;left:457.50px;top:261.12px;width:83.80px;overflow:hidden;text-align:right;line-height:14px;font-size:10px;font-weight:normal;color:#1c1c1c;white-space:nowrap"><span class="c" style="display:inline-block;transform:scaleX(0.945);transform-origin:100% 50%">235785</span></div>
<div style="position:absolute;left:543.30px;top:261.12px;width:40.10px;overflow:hidden;text-align:right;line-height:14px;font-size:10px;font-weight:normal;color:#1c1c1c;white-space:nowrap"><span class="c" style="display:inline-block;transform:scaleX(0.945);transform-origin:100% 50%">252776</span></div>
<div style="position:absolute;left:585.40px;top:261.12px;width:50.90px;overflow:hidden;text-align:right;line-height:14px;font-size:10px;font-weight:normal;color:#1c1c1c;white-space:nowrap"><span class="c" style="display:inline-block;transform:scaleX(0.945);transform-origin:100% 50%">252017.4</span></div>
<div style="position:absolute;left:638.30px;top:261.12px;width:57.50px;overflow:hidden;text-align:right;line-height:14px;font-size:10px;font-weight:normal;color:#1c1c1c;white-space:nowrap"><span class="c" style="display:inline-block;transform:scaleX(0.945);transform-origin:100% 50%">740578.4</span></div>
<svg style="position:absolute;left:387.5px;top:278.69px;" width="7" height="7" viewBox="0 0 7 7"><rect x="0.5" y="0.5" width="6" height="6" rx="0.8" fill="#ececec" stroke="#a8a8a8" stroke-width="0.8"/><path d="M1.8 3.5 H5.2" stroke="#555" stroke-width="0.9"/></svg>
<div style="position:absolute;left:395.50px;top:276.19px;width:62.00px;overflow:hidden;line-height:14px;font-size:10px;font-weight:bold;color:#1c1c1c;white-space:nowrap"><span class="cb" style="display:inline-block;transform:scaleX(0.94);transform-origin:0 50%">North</span></div>
<div style="position:absolute;left:457.50px;top:276.19px;width:83.80px;overflow:hidden;text-align:right;line-height:14px;font-size:10px;font-weight:bold;color:#1c1c1c;white-space:nowrap"><span class="cb" style="display:inline-block;transform:scaleX(0.945);transform-origin:100% 50%">232944</span></div>
<div style="position:absolute;left:543.30px;top:276.19px;width:40.10px;overflow:hidden;text-align:right;line-height:14px;font-size:10px;font-weight:bold;color:#1c1c1c;white-space:nowrap"><span class="cb" style="display:inline-block;transform:scaleX(0.945);transform-origin:100% 50%">269723</span></div>
<div style="position:absolute;left:585.40px;top:276.19px;width:50.90px;overflow:hidden;text-align:right;line-height:14px;font-size:10px;font-weight:bold;color:#1c1c1c;white-space:nowrap"><span class="cb" style="display:inline-block;transform:scaleX(0.945);transform-origin:100% 50%">257455.8</span></div>
<div style="position:absolute;left:638.30px;top:276.19px;width:57.50px;overflow:hidden;text-align:right;line-height:14px;font-size:10px;font-weight:bold;color:#1c1c1c;white-space:nowrap"><span class="cb" style="display:inline-block;transform:scaleX(0.945);transform-origin:100% 50%">760122.8</span></div>
<div style="position:absolute;left:384px;top:289.06px;width:313.79999999999995px;height:1px;background:#ccdae9;"></div>
<div style="position:absolute;left:405.50px;top:291.26px;width:52.00px;overflow:hidden;line-height:14px;font-size:10px;font-weight:normal;color:#1c1c1c;white-space:nowrap"><span class="c" style="display:inline-block;transform:scaleX(1.02);transform-origin:0 50%">Smith</span></div>
<div style="position:absolute;left:457.50px;top:291.26px;width:83.80px;overflow:hidden;text-align:right;line-height:14px;font-size:10px;font-weight:normal;color:#1c1c1c;white-space:nowrap"><span class="c" style="display:inline-block;transform:scaleX(0.945);transform-origin:100% 50%">232944</span></div>
<div style="position:absolute;left:543.30px;top:291.26px;width:40.10px;overflow:hidden;text-align:right;line-height:14px;font-size:10px;font-weight:normal;color:#1c1c1c;white-space:nowrap"><span class="c" style="display:inline-block;transform:scaleX(0.945);transform-origin:100% 50%">269723</span></div>
<div style="position:absolute;left:585.40px;top:291.26px;width:50.90px;overflow:hidden;text-align:right;line-height:14px;font-size:10px;font-weight:normal;color:#1c1c1c;white-space:nowrap"><span class="c" style="display:inline-block;transform:scaleX(0.945);transform-origin:100% 50%">257455.8</span></div>
<div style="position:absolute;left:638.30px;top:291.26px;width:57.50px;overflow:hidden;text-align:right;line-height:14px;font-size:10px;font-weight:normal;color:#1c1c1c;white-space:nowrap"><span class="c" style="display:inline-block;transform:scaleX(0.945);transform-origin:100% 50%">760122.8</span></div>
<svg style="position:absolute;left:387.5px;top:308.83px;" width="7" height="7" viewBox="0 0 7 7"><rect x="0.5" y="0.5" width="6" height="6" rx="0.8" fill="#ececec" stroke="#a8a8a8" stroke-width="0.8"/><path d="M1.8 3.5 H5.2" stroke="#555" stroke-width="0.9"/></svg>
<div style="position:absolute;left:395.50px;top:306.33px;width:62.00px;overflow:hidden;line-height:14px;font-size:10px;font-weight:bold;color:#1c1c1c;white-space:nowrap"><span class="cb" style="display:inline-block;transform:scaleX(0.94);transform-origin:0 50%">South</span></div>
<div style="position:absolute;left:457.50px;top:306.33px;width:83.80px;overflow:hidden;text-align:right;line-height:14px;font-size:10px;font-weight:bold;color:#1c1c1c;white-space:nowrap"><span class="cb" style="display:inline-block;transform:scaleX(0.945);transform-origin:100% 50%">153345.75</span></div>
<div style="position:absolute;left:543.30px;top:306.33px;width:40.10px;overflow:hidden;text-align:right;line-height:14px;font-size:10px;font-weight:bold;color:#1c1c1c;white-space:nowrap"><span class="cb" style="display:inline-block;transform:scaleX(0.945);transform-origin:100% 50%">180369</span></div>
<div style="position:absolute;left:585.40px;top:306.33px;width:50.90px;overflow:hidden;text-align:right;line-height:14px;font-size:10px;font-weight:bold;color:#1c1c1c;white-space:nowrap"><span class="cb" style="display:inline-block;transform:scaleX(0.945);transform-origin:100% 50%">172254.2</span></div>
<div style="position:absolute;left:638.30px;top:306.33px;width:57.50px;overflow:hidden;text-align:right;line-height:14px;font-size:10px;font-weight:bold;color:#1c1c1c;white-space:nowrap"><span class="cb" style="display:inline-block;transform:scaleX(0.945);transform-origin:100% 50%">505968.95</span></div>
<div style="position:absolute;left:384px;top:319.2px;width:313.79999999999995px;height:1px;background:#ccdae9;"></div>
<div style="position:absolute;left:405.50px;top:321.40px;width:52.00px;overflow:hidden;line-height:14px;font-size:10px;font-weight:normal;color:#1c1c1c;white-space:nowrap"><span class="c" style="display:inline-block;transform:scaleX(1.02);transform-origin:0 50%">Gonzales</span></div>
<div style="position:absolute;left:457.50px;top:321.40px;width:83.80px;overflow:hidden;text-align:right;line-height:14px;font-size:10px;font-weight:normal;color:#1c1c1c;white-space:nowrap"><span class="c" style="display:inline-block;transform:scaleX(0.945);transform-origin:100% 50%">153345.75</span></div>
<div style="position:absolute;left:543.30px;top:321.40px;width:40.10px;overflow:hidden;text-align:right;line-height:14px;font-size:10px;font-weight:normal;color:#1c1c1c;white-space:nowrap"><span class="c" style="display:inline-block;transform:scaleX(0.945);transform-origin:100% 50%">180369</span></div>
<div style="position:absolute;left:585.40px;top:321.40px;width:50.90px;overflow:hidden;text-align:right;line-height:14px;font-size:10px;font-weight:normal;color:#1c1c1c;white-space:nowrap"><span class="c" style="display:inline-block;transform:scaleX(0.945);transform-origin:100% 50%">172254.2</span></div>
<div style="position:absolute;left:638.30px;top:321.40px;width:57.50px;overflow:hidden;text-align:right;line-height:14px;font-size:10px;font-weight:normal;color:#1c1c1c;white-space:nowrap"><span class="c" style="display:inline-block;transform:scaleX(0.945);transform-origin:100% 50%">505968.95</span></div>
<svg style="position:absolute;left:387.5px;top:338.96999999999997px;" width="7" height="7" viewBox="0 0 7 7"><rect x="0.5" y="0.5" width="6" height="6" rx="0.8" fill="#ececec" stroke="#a8a8a8" stroke-width="0.8"/><path d="M1.8 3.5 H5.2" stroke="#555" stroke-width="0.9"/></svg>
<div style="position:absolute;left:395.50px;top:336.47px;width:62.00px;overflow:hidden;line-height:14px;font-size:10px;font-weight:bold;color:#1c1c1c;white-space:nowrap"><span class="cb" style="display:inline-block;transform:scaleX(0.94);transform-origin:0 50%">West</span></div>
<div style="position:absolute;left:457.50px;top:336.47px;width:83.80px;overflow:hidden;text-align:right;line-height:14px;font-size:10px;font-weight:bold;color:#1c1c1c;white-space:nowrap"><span class="cb" style="display:inline-block;transform:scaleX(0.945);transform-origin:100% 50%">186841.5</span></div>
<div style="position:absolute;left:543.30px;top:336.47px;width:40.10px;overflow:hidden;text-align:right;line-height:14px;font-size:10px;font-weight:bold;color:#1c1c1c;white-space:nowrap"><span class="cb" style="display:inline-block;transform:scaleX(0.945);transform-origin:100% 50%">205478</span></div>
<div style="position:absolute;left:585.40px;top:336.47px;width:50.90px;overflow:hidden;text-align:right;line-height:14px;font-size:10px;font-weight:bold;color:#1c1c1c;white-space:nowrap"><span class="cb" style="display:inline-block;transform:scaleX(0.945);transform-origin:100% 50%">204610.4</span></div>
<div style="position:absolute;left:638.30px;top:336.47px;width:57.50px;overflow:hidden;text-align:right;line-height:14px;font-size:10px;font-weight:bold;color:#1c1c1c;white-space:nowrap"><span class="cb" style="display:inline-block;transform:scaleX(0.945);transform-origin:100% 50%">596929.9</span></div>
<div style="position:absolute;left:384px;top:349.34000000000003px;width:313.79999999999995px;height:1px;background:#ccdae9;"></div>
<div style="position:absolute;left:405.50px;top:351.54px;width:52.00px;overflow:hidden;line-height:14px;font-size:10px;font-weight:normal;color:#1c1c1c;white-space:nowrap"><span class="c" style="display:inline-block;transform:scaleX(1.02);transform-origin:0 50%">Robertson</span></div>
<div style="position:absolute;left:457.50px;top:351.54px;width:83.80px;overflow:hidden;text-align:right;line-height:14px;font-size:10px;font-weight:normal;color:#1c1c1c;white-space:nowrap"><span class="c" style="display:inline-block;transform:scaleX(0.945);transform-origin:100% 50%">186841.5</span></div>
<div style="position:absolute;left:543.30px;top:351.54px;width:40.10px;overflow:hidden;text-align:right;line-height:14px;font-size:10px;font-weight:normal;color:#1c1c1c;white-space:nowrap"><span class="c" style="display:inline-block;transform:scaleX(0.945);transform-origin:100% 50%">205478</span></div>
<div style="position:absolute;left:585.40px;top:351.54px;width:50.90px;overflow:hidden;text-align:right;line-height:14px;font-size:10px;font-weight:normal;color:#1c1c1c;white-space:nowrap"><span class="c" style="display:inline-block;transform:scaleX(0.945);transform-origin:100% 50%">204610.4</span></div>
<div style="position:absolute;left:638.30px;top:351.54px;width:57.50px;overflow:hidden;text-align:right;line-height:14px;font-size:10px;font-weight:normal;color:#1c1c1c;white-space:nowrap"><span class="c" style="display:inline-block;transform:scaleX(0.945);transform-origin:100% 50%">596929.9</span></div>
<div style="position:absolute;left:384px;top:364.90999999999997px;width:314.29999999999995px;height:15.57000000000005px;background:#dce6f1;"></div>
<div style="position:absolute;left:384px;top:364.40999999999997px;width:313.79999999999995px;height:1px;background:#b2c6dd;"></div>
<div style="position:absolute;left:386.00px;top:366.61px;width:71.50px;overflow:hidden;line-height:14px;font-size:10px;font-weight:bold;color:#1c1c1c;white-space:nowrap"><span class="cb" style="display:inline-block;transform:scaleX(0.94);transform-origin:0 50%">Grand Total</span></div>
<div style="position:absolute;left:457.50px;top:366.61px;width:83.80px;overflow:hidden;text-align:right;line-height:14px;font-size:10px;font-weight:bold;color:#1c1c1c;white-space:nowrap"><span class="cb" style="display:inline-block;transform:scaleX(0.945);transform-origin:100% 50%">1008662.75</span></div>
<div style="position:absolute;left:543.30px;top:366.61px;width:40.10px;overflow:hidden;text-align:right;line-height:14px;font-size:10px;font-weight:bold;color:#1c1c1c;white-space:nowrap"><span class="cb" style="display:inline-block;transform:scaleX(0.945);transform-origin:100% 50%">1138686</span></div>
<div style="position:absolute;left:585.40px;top:366.61px;width:50.90px;overflow:hidden;text-align:right;line-height:14px;font-size:10px;font-weight:bold;color:#1c1c1c;white-space:nowrap"><span class="cb" style="display:inline-block;transform:scaleX(0.945);transform-origin:100% 50%">1107228.2</span></div>
<div style="position:absolute;left:638.30px;top:366.61px;width:57.50px;overflow:hidden;text-align:right;line-height:14px;font-size:10px;font-weight:bold;color:#1c1c1c;white-space:nowrap"><span class="cb" style="display:inline-block;transform:scaleX(0.945);transform-origin:100% 50%">3254576.95</span></div>
<div style="position:absolute;left:384px;top:410.12px;width:201.89999999999998px;height:15.569999999999993px;background:#dce6f1;"></div>
<div style="position:absolute;left:384px;top:424.69px;width:201.39999999999998px;height:1px;background:#b2c6dd;"></div>
<div style="position:absolute;left:386.00px;top:411.82px;width:58.50px;overflow:hidden;line-height:14px;font-size:10px;font-weight:bold;color:#1c1c1c;white-space:nowrap"><span class="cb" style="display:inline-block;transform:scaleX(0.94);transform-origin:0 50%">Row Labels</span></div>
<svg style="position:absolute;left:444.5px;top:412.12px;" width="12" height="12" viewBox="0 0 12 12"><rect x="0.5" y="0.5" width="11" height="11" fill="#f7f7f7" stroke="#c8c8c8"/><path d="M3.5 5 H8.5 L6 7.5 Z" fill="#6b6b6b"/></svg>
<div style="position:absolute;left:459.50px;top:411.82px;width:83.80px;overflow:hidden;line-height:14px;font-size:10px;font-weight:bold;color:#1c1c1c;white-space:nowrap"><span class="cb" style="display:inline-block;transform:scaleX(0.94);transform-origin:0 50%">Sum of Sales</span></div>
<div style="position:absolute;left:545.30px;top:411.82px;width:118.00px;overflow:hidden;line-height:14px;font-size:10px;font-weight:bold;color:#1c1c1c;white-space:nowrap"><span class="cb" style="display:inline-block;transform:scaleX(0.94);transform-origin:0 50%">Count of Type</span></div>
<div style="position:absolute;left:386.00px;top:426.89px;width:71.50px;overflow:hidden;line-height:14px;font-size:10px;font-weight:normal;color:#1c1c1c;white-space:nowrap"><span class="c" style="display:inline-block;transform:scaleX(1.02);transform-origin:0 50%">Carbon Nails</span></div>
<div style="position:absolute;left:457.50px;top:426.89px;width:83.80px;overflow:hidden;text-align:right;line-height:14px;font-size:10px;font-weight:normal;color:#1c1c1c;white-space:nowrap"><span class="c" style="display:inline-block;transform:scaleX(0.945);transform-origin:100% 50%">384812.6</span></div>
<div style="position:absolute;left:543.30px;top:426.89px;width:40.10px;overflow:hidden;text-align:right;line-height:14px;font-size:10px;font-weight:normal;color:#1c1c1c;white-space:nowrap"><span class="c" style="display:inline-block;transform:scaleX(0.945);transform-origin:100% 50%">72</span></div>
<div style="position:absolute;left:386.00px;top:441.96px;width:71.50px;overflow:hidden;line-height:14px;font-size:10px;font-weight:normal;color:#1c1c1c;white-space:nowrap"><span class="c" style="display:inline-block;transform:scaleX(1.02);transform-origin:0 50%">Plastic Nails</span></div>
<div style="position:absolute;left:457.50px;top:441.96px;width:83.80px;overflow:hidden;text-align:right;line-height:14px;font-size:10px;font-weight:normal;color:#1c1c1c;white-space:nowrap"><span class="c" style="display:inline-block;transform:scaleX(0.945);transform-origin:100% 50%">840113.65</span></div>
<div style="position:absolute;left:543.30px;top:441.96px;width:40.10px;overflow:hidden;text-align:right;line-height:14px;font-size:10px;font-weight:normal;color:#1c1c1c;white-space:nowrap"><span class="c" style="display:inline-block;transform:scaleX(0.945);transform-origin:100% 50%">102</span></div>
<div style="position:absolute;left:386.00px;top:457.03px;width:71.50px;overflow:hidden;line-height:14px;font-size:10px;font-weight:normal;color:#1c1c1c;white-space:nowrap"><span class="c" style="display:inline-block;transform:scaleX(1.02);transform-origin:0 50%">Steel Nails</span></div>
<div style="position:absolute;left:457.50px;top:457.03px;width:83.80px;overflow:hidden;text-align:right;line-height:14px;font-size:10px;font-weight:normal;color:#1c1c1c;white-space:nowrap"><span class="c" style="display:inline-block;transform:scaleX(0.945);transform-origin:100% 50%">1379573.2</span></div>
<div style="position:absolute;left:543.30px;top:457.03px;width:40.10px;overflow:hidden;text-align:right;line-height:14px;font-size:10px;font-weight:normal;color:#1c1c1c;white-space:nowrap"><span class="c" style="display:inline-block;transform:scaleX(0.945);transform-origin:100% 50%">174</span></div>
<div style="position:absolute;left:386.00px;top:472.10px;width:71.50px;overflow:hidden;line-height:14px;font-size:10px;font-weight:normal;color:#1c1c1c;white-space:nowrap"><span class="c" style="display:inline-block;transform:scaleX(1.02);transform-origin:0 50%">Wood Nails</span></div>
<div style="position:absolute;left:457.50px;top:472.10px;width:83.80px;overflow:hidden;text-align:right;line-height:14px;font-size:10px;font-weight:normal;color:#1c1c1c;white-space:nowrap"><span class="c" style="display:inline-block;transform:scaleX(0.945);transform-origin:100% 50%">650077.5</span></div>
<div style="position:absolute;left:543.30px;top:472.10px;width:40.10px;overflow:hidden;text-align:right;line-height:14px;font-size:10px;font-weight:normal;color:#1c1c1c;white-space:nowrap"><span class="c" style="display:inline-block;transform:scaleX(0.945);transform-origin:100% 50%">96</span></div>
<div style="position:absolute;left:384px;top:485.47px;width:201.89999999999998px;height:15.569999999999993px;background:#dce6f1;"></div>
<div style="position:absolute;left:384px;top:484.97px;width:201.39999999999998px;height:1px;background:#b2c6dd;"></div>
<div style="position:absolute;left:386.00px;top:487.17px;width:71.50px;overflow:hidden;line-height:14px;font-size:10px;font-weight:bold;color:#1c1c1c;white-space:nowrap"><span class="cb" style="display:inline-block;transform:scaleX(0.94);transform-origin:0 50%">Grand Total</span></div>
<div style="position:absolute;left:457.50px;top:487.17px;width:83.80px;overflow:hidden;text-align:right;line-height:14px;font-size:10px;font-weight:bold;color:#1c1c1c;white-space:nowrap"><span class="cb" style="display:inline-block;transform:scaleX(0.945);transform-origin:100% 50%">3254576.95</span></div>
<div style="position:absolute;left:543.30px;top:487.17px;width:40.10px;overflow:hidden;text-align:right;line-height:14px;font-size:10px;font-weight:bold;color:#1c1c1c;white-space:nowrap"><span class="cb" style="display:inline-block;transform:scaleX(0.945);transform-origin:100% 50%">444</span></div>
<div style="position:absolute;left:384px;top:530.6800000000001px;width:201.89999999999998px;height:15.569999999999936px;background:#dce6f1;"></div>
<div style="position:absolute;left:384px;top:545.25px;width:201.39999999999998px;height:1px;background:#b2c6dd;"></div>
<div style="position:absolute;left:384px;top:651.24px;width:201.89999999999998px;height:60.77999999999997px;background:#d3d3d3;"></div>
<div style="position:absolute;left:384px;top:666.31px;width:73.5px;height:15.07000000000005px;background:#fff;"></div>
<div style="position:absolute;left:386.00px;top:532.38px;width:58.50px;overflow:hidden;line-height:14px;font-size:10px;font-weight:bold;color:#1c1c1c;white-space:nowrap"><span class="cb" style="display:inline-block;transform:scaleX(0.94);transform-origin:0 50%">Row Labels</span></div>
<svg style="position:absolute;left:444.5px;top:532.6800000000001px;" width="12" height="12" viewBox="0 0 12 12"><rect x="0.5" y="0.5" width="11" height="11" fill="#f7f7f7" stroke="#c8c8c8"/><path d="M3.5 5 H8.5 L6 7.5 Z" fill="#6b6b6b"/></svg>
<div style="position:absolute;left:459.50px;top:532.38px;width:83.80px;overflow:hidden;line-height:14px;font-size:10px;font-weight:bold;color:#1c1c1c;white-space:nowrap"><span class="cb" style="display:inline-block;transform:scaleX(0.94);transform-origin:0 50%">Average of Sales</span></div>
<div style="position:absolute;left:545.30px;top:532.38px;width:118.00px;overflow:hidden;line-height:14px;font-size:10px;font-weight:bold;color:#1c1c1c;white-space:nowrap"><span class="cb" style="display:inline-block;transform:scaleX(0.94);transform-origin:0 50%">Sum of Sales</span></div>
<svg style="position:absolute;left:387.5px;top:549.95px;" width="7" height="7" viewBox="0 0 7 7"><rect x="0.5" y="0.5" width="6" height="6" rx="0.8" fill="#ececec" stroke="#a8a8a8" stroke-width="0.8"/><path d="M1.8 3.5 H5.2" stroke="#555" stroke-width="0.9"/></svg>
<div style="position:absolute;left:395.50px;top:547.45px;width:62.00px;overflow:hidden;line-height:14px;font-size:10px;font-weight:bold;color:#1c1c1c;white-space:nowrap"><span class="cb" style="display:inline-block;transform:scaleX(0.94);transform-origin:0 50%">Quarter 1</span></div>
<div style="position:absolute;left:457.50px;top:547.45px;width:83.80px;overflow:hidden;text-align:right;line-height:14px;font-size:10px;font-weight:bold;color:#1c1c1c;white-space:nowrap"><span class="cb" style="display:inline-block;transform:scaleX(0.945);transform-origin:100% 50%">8378.652011</span></div>
<div style="position:absolute;left:543.30px;top:547.45px;width:40.10px;overflow:hidden;text-align:right;line-height:14px;font-size:10px;font-weight:bold;color:#1c1c1c;white-space:nowrap"><span class="cb" style="display:inline-block;transform:scaleX(0.945);transform-origin:100% 50%">1457885</span></div>
<div style="position:absolute;left:384px;top:560.3199999999999px;width:201.39999999999998px;height:1px;background:#ccdae9;"></div>
<div style="position:absolute;left:405.50px;top:562.52px;width:52.00px;overflow:hidden;line-height:14px;font-size:10px;font-weight:normal;color:#1c1c1c;white-space:nowrap"><span class="c" style="display:inline-block;transform:scaleX(1.02);transform-origin:0 50%">January</span></div>
<div style="position:absolute;left:457.50px;top:562.52px;width:83.80px;overflow:hidden;text-align:right;line-height:14px;font-size:10px;font-weight:normal;color:#1c1c1c;white-space:nowrap"><span class="c" style="display:inline-block;transform:scaleX(0.945);transform-origin:100% 50%">8555.6</span></div>
<div style="position:absolute;left:543.30px;top:562.52px;width:40.10px;overflow:hidden;text-align:right;line-height:14px;font-size:10px;font-weight:normal;color:#1c1c1c;white-space:nowrap"><span class="c" style="display:inline-block;transform:scaleX(0.945);transform-origin:100% 50%">513336</span></div>
<div style="position:absolute;left:405.50px;top:577.59px;width:52.00px;overflow:hidden;line-height:14px;font-size:10px;font-weight:normal;color:#1c1c1c;white-space:nowrap"><span class="c" style="display:inline-block;transform:scaleX(1.02);transform-origin:0 50%">February</span></div>
<div style="position:absolute;left:457.50px;top:577.59px;width:83.80px;overflow:hidden;text-align:right;line-height:14px;font-size:10px;font-weight:normal;color:#1c1c1c;white-space:nowrap"><span class="c" style="display:inline-block;transform:scaleX(0.945);transform-origin:100% 50%">9654.532407</span></div>
<div style="position:absolute;left:543.30px;top:577.59px;width:40.10px;overflow:hidden;text-align:right;line-height:14px;font-size:10px;font-weight:normal;color:#1c1c1c;white-space:nowrap"><span class="c" style="display:inline-block;transform:scaleX(0.945);transform-origin:100% 50%">521345</span></div>
<div style="position:absolute;left:405.50px;top:592.66px;width:52.00px;overflow:hidden;line-height:14px;font-size:10px;font-weight:normal;color:#1c1c1c;white-space:nowrap"><span class="c" style="display:inline-block;transform:scaleX(1.02);transform-origin:0 50%">March</span></div>
<div style="position:absolute;left:457.50px;top:592.66px;width:83.80px;overflow:hidden;text-align:right;line-height:14px;font-size:10px;font-weight:normal;color:#1c1c1c;white-space:nowrap"><span class="c" style="display:inline-block;transform:scaleX(0.945);transform-origin:100% 50%">7053.411667</span></div>
<div style="position:absolute;left:543.30px;top:592.66px;width:40.10px;overflow:hidden;text-align:right;line-height:14px;font-size:10px;font-weight:normal;color:#1c1c1c;white-space:nowrap"><span class="c" style="display:inline-block;transform:scaleX(0.945);transform-origin:100% 50%">423205</span></div>
<svg style="position:absolute;left:387.5px;top:610.23px;" width="7" height="7" viewBox="0 0 7 7"><rect x="0.5" y="0.5" width="6" height="6" rx="0.8" fill="#ececec" stroke="#a8a8a8" stroke-width="0.8"/><path d="M1.8 3.5 H5.2" stroke="#555" stroke-width="0.9"/></svg>
<div style="position:absolute;left:395.50px;top:607.73px;width:62.00px;overflow:hidden;line-height:14px;font-size:10px;font-weight:bold;color:#1c1c1c;white-space:nowrap"><span class="cb" style="display:inline-block;transform:scaleX(0.94);transform-origin:0 50%">Quarter 2</span></div>
<div style="position:absolute;left:457.50px;top:607.73px;width:83.80px;overflow:hidden;text-align:right;line-height:14px;font-size:10px;font-weight:bold;color:#1c1c1c;white-space:nowrap"><span class="cb" style="display:inline-block;transform:scaleX(0.945);transform-origin:100% 50%">6852.607692</span></div>
<div style="position:absolute;left:543.30px;top:607.73px;width:40.10px;overflow:hidden;text-align:right;line-height:14px;font-size:10px;font-weight:bold;color:#1c1c1c;white-space:nowrap"><span class="cb" style="display:inline-block;transform:scaleX(0.945);transform-origin:100% 50%">1069007</span></div>
<div style="position:absolute;left:384px;top:620.6px;width:201.39999999999998px;height:1px;background:#ccdae9;"></div>
<div style="position:absolute;left:405.50px;top:622.80px;width:52.00px;overflow:hidden;line-height:14px;font-size:10px;font-weight:normal;color:#1c1c1c;white-space:nowrap"><span class="c" style="display:inline-block;transform:scaleX(1.02);transform-origin:0 50%">April</span></div>
<div style="position:absolute;left:457.50px;top:622.80px;width:83.80px;overflow:hidden;text-align:right;line-height:14px;font-size:10px;font-weight:normal;color:#1c1c1c;white-space:nowrap"><span class="c" style="display:inline-block;transform:scaleX(0.945);transform-origin:100% 50%">7116.604444</span></div>
<div style="position:absolute;left:543.30px;top:622.80px;width:40.10px;overflow:hidden;text-align:right;line-height:14px;font-size:10px;font-weight:normal;color:#1c1c1c;white-space:nowrap"><span class="c" style="display:inline-block;transform:scaleX(0.945);transform-origin:100% 50%">640494</span></div>
<div style="position:absolute;left:405.50px;top:637.87px;width:52.00px;overflow:hidden;line-height:14px;font-size:10px;font-weight:normal;color:#1c1c1c;white-space:nowrap"><span class="c" style="display:inline-block;transform:scaleX(1.02);transform-origin:0 50%">May</span></div>
<div style="position:absolute;left:457.50px;top:637.87px;width:83.80px;overflow:hidden;text-align:right;line-height:14px;font-size:10px;font-weight:normal;color:#1c1c1c;white-space:nowrap"><span class="c" style="display:inline-block;transform:scaleX(0.945);transform-origin:100% 50%">6492.612121</span></div>
<div style="position:absolute;left:543.30px;top:637.87px;width:40.10px;overflow:hidden;text-align:right;line-height:14px;font-size:10px;font-weight:normal;color:#1c1c1c;white-space:nowrap"><span class="c" style="display:inline-block;transform:scaleX(0.945);transform-origin:100% 50%">428512</span></div>
<svg style="position:absolute;left:387.5px;top:655.44px;" width="7" height="7" viewBox="0 0 7 7"><rect x="0.5" y="0.5" width="6" height="6" rx="0.8" fill="#ececec" stroke="#a8a8a8" stroke-width="0.8"/><path d="M1.8 3.5 H5.2" stroke="#555" stroke-width="0.9"/></svg>
<div style="position:absolute;left:395.50px;top:652.94px;width:62.00px;overflow:hidden;line-height:14px;font-size:10px;font-weight:bold;color:#1c1c1c;white-space:nowrap"><span class="cb" style="display:inline-block;transform:scaleX(0.94);transform-origin:0 50%">Quarter 4</span></div>
<div style="position:absolute;left:457.50px;top:652.94px;width:83.80px;overflow:hidden;text-align:right;line-height:14px;font-size:10px;font-weight:bold;color:#1c1c1c;white-space:nowrap"><span class="cb" style="display:inline-block;transform:scaleX(0.945);transform-origin:100% 50%">6385.861667</span></div>
<div style="position:absolute;left:543.30px;top:652.94px;width:40.10px;overflow:hidden;text-align:right;line-height:14px;font-size:10px;font-weight:bold;color:#1c1c1c;white-space:nowrap"><span class="cb" style="display:inline-block;transform:scaleX(0.945);transform-origin:100% 50%">383152</span></div>
<div style="position:absolute;left:384px;top:665.81px;width:201.39999999999998px;height:1px;background:#b7c6d9;"></div>
<div style="position:absolute;left:405.50px;top:668.01px;width:52.00px;overflow:hidden;line-height:14px;font-size:10px;font-weight:normal;color:#1c1c1c;white-space:nowrap"><span class="c" style="display:inline-block;transform:scaleX(1.02);transform-origin:0 50%">November</span></div>
<div style="position:absolute;left:457.50px;top:668.01px;width:83.80px;overflow:hidden;text-align:right;line-height:14px;font-size:10px;font-weight:normal;color:#1c1c1c;white-space:nowrap"><span class="c" style="display:inline-block;transform:scaleX(0.945);transform-origin:100% 50%">6385.861667</span></div>
<div style="position:absolute;left:543.30px;top:668.01px;width:40.10px;overflow:hidden;text-align:right;line-height:14px;font-size:10px;font-weight:normal;color:#1c1c1c;white-space:nowrap"><span class="c" style="display:inline-block;transform:scaleX(0.945);transform-origin:100% 50%">383152</span></div>
<svg style="position:absolute;left:387.5px;top:685.58px;" width="7" height="7" viewBox="0 0 7 7"><rect x="0.5" y="0.5" width="6" height="6" rx="0.8" fill="#ececec" stroke="#a8a8a8" stroke-width="0.8"/><path d="M1.8 3.5 H5.2" stroke="#555" stroke-width="0.9"/></svg>
<div style="position:absolute;left:395.50px;top:683.08px;width:62.00px;overflow:hidden;line-height:14px;font-size:10px;font-weight:bold;color:#1c1c1c;white-space:nowrap"><span class="cb" style="display:inline-block;transform:scaleX(0.94);transform-origin:0 50%">December</span></div>
<div style="position:absolute;left:457.50px;top:683.08px;width:83.80px;overflow:hidden;text-align:right;line-height:14px;font-size:10px;font-weight:bold;color:#1c1c1c;white-space:nowrap"><span class="cb" style="display:inline-block;transform:scaleX(0.945);transform-origin:100% 50%">6380.240741</span></div>
<div style="position:absolute;left:543.30px;top:683.08px;width:40.10px;overflow:hidden;text-align:right;line-height:14px;font-size:10px;font-weight:bold;color:#1c1c1c;white-space:nowrap"><span class="cb" style="display:inline-block;transform:scaleX(0.945);transform-origin:100% 50%">344533</span></div>
<div style="position:absolute;left:384px;top:695.95px;width:201.39999999999998px;height:1px;background:#b7c6d9;"></div>
<div style="position:absolute;left:405.50px;top:698.15px;width:52.00px;overflow:hidden;line-height:14px;font-size:10px;font-weight:normal;color:#1c1c1c;white-space:nowrap"><span class="c" style="display:inline-block;transform:scaleX(1.02);transform-origin:0 50%">December</span></div>
<div style="position:absolute;left:457.50px;top:698.15px;width:83.80px;overflow:hidden;text-align:right;line-height:14px;font-size:10px;font-weight:normal;color:#1c1c1c;white-space:nowrap"><span class="c" style="display:inline-block;transform:scaleX(0.945);transform-origin:100% 50%">6380.240741</span></div>
<div style="position:absolute;left:543.30px;top:698.15px;width:40.10px;overflow:hidden;text-align:right;line-height:14px;font-size:10px;font-weight:normal;color:#1c1c1c;white-space:nowrap"><span class="c" style="display:inline-block;transform:scaleX(0.945);transform-origin:100% 50%">344533</span></div>
<div style="position:absolute;left:384px;top:711.52px;width:201.89999999999998px;height:15.57000000000005px;background:#dce6f1;"></div>
<div style="position:absolute;left:386.00px;top:713.22px;width:71.50px;overflow:hidden;line-height:14px;font-size:10px;font-weight:bold;color:#1c1c1c;white-space:nowrap"><span class="cb" style="display:inline-block;transform:scaleX(0.94);transform-origin:0 50%">Grand Total</span></div>
<div style="position:absolute;left:457.50px;top:713.22px;width:83.80px;overflow:hidden;text-align:right;line-height:14px;font-size:10px;font-weight:bold;color:#1c1c1c;white-space:nowrap"><span class="cb" style="display:inline-block;transform:scaleX(0.945);transform-origin:100% 50%">7330.128266</span></div>
<div style="position:absolute;left:543.30px;top:713.22px;width:40.10px;overflow:hidden;text-align:right;line-height:14px;font-size:10px;font-weight:bold;color:#1c1c1c;white-space:nowrap"><span class="cb" style="display:inline-block;transform:scaleX(0.945);transform-origin:100% 50%">3254577</span></div>
<div style="position:absolute;left:383px;top:650.24px;width:203.39999999999998px;height:61.77999999999997px;border:2px solid #2a7a50;"></div>
<div style="position:absolute;left:583.4px;top:710.02px;width:5px;height:5px;background:#217346;border:1px solid #fff;"></div>
<div style="position:absolute;left:755.8px;top:199.14px;width:407.70000000000005px;height:45.71000000000001px;background:#dce6f1;"></div>
<div style="position:absolute;left:1011.3px;top:214.21px;width:66.0px;height:105.48999999999998px;background:#e0e0e0;"></div>
<div style="position:absolute;left:755.8px;top:243.85px;width:407.70000000000005px;height:1px;background:#b2c6dd;"></div>
<div style="position:absolute;left:757.80px;top:200.84px;width:67.40px;overflow:hidden;line-height:14px;font-size:10px;font-weight:bold;color:#1c1c1c;white-space:nowrap"><span class="cb" style="display:inline-block;transform:scaleX(0.94);transform-origin:0 50%">Sum of Sales</span></div>
<div style="position:absolute;left:827.20px;top:200.84px;width:71.20px;overflow:hidden;line-height:14px;font-size:10px;font-weight:bold;color:#1c1c1c;white-space:nowrap"><span class="cb" style="display:inline-block;transform:scaleX(0.94);transform-origin:0 50%">Column Labels</span></div>
<svg style="position:absolute;left:898.4px;top:201.14px;" width="12" height="12" viewBox="0 0 12 12"><rect x="0.5" y="0.5" width="11" height="11" fill="#f7f7f7" stroke="#c8c8c8"/><path d="M3.5 5 H8.5 L6 7.5 Z" fill="#6b6b6b"/></svg>
<svg style="position:absolute;left:828.7px;top:218.41px;" width="7" height="7" viewBox="0 0 7 7"><rect x="0.5" y="0.5" width="6" height="6" rx="0.8" fill="#ececec" stroke="#a8a8a8" stroke-width="0.8"/><path d="M1.8 3.5 H5.2" stroke="#555" stroke-width="0.9"/></svg>
<div style="position:absolute;left:836.70px;top:215.91px;width:74.70px;overflow:hidden;line-height:14px;font-size:10px;font-weight:bold;color:#1c1c1c;white-space:nowrap"><span class="cb" style="display:inline-block;transform:scaleX(0.94);transform-origin:0 50%">Group1</span></div>
<div style="position:absolute;left:1013.30px;top:215.91px;width:64.00px;overflow:hidden;line-height:14px;font-size:10px;font-weight:bold;color:#1c1c1c;white-space:nowrap"><span class="cb" style="display:inline-block;transform:scaleX(0.94);transform-origin:0 50%">Group1 Total</span></div>
<svg style="position:absolute;left:1080.8px;top:218.41px;" width="7" height="7" viewBox="0 0 7 7"><rect x="0.5" y="0.5" width="6" height="6" rx="0.8" fill="#ececec" stroke="#a8a8a8" stroke-width="0.8"/><path d="M1.8 3.5 H5.2" stroke="#555" stroke-width="0.9"/></svg>
<div style="position:absolute;left:1088.80px;top:215.91px;width:78.50px;overflow:hidden;line-height:14px;font-size:10px;font-weight:bold;color:#1c1c1c;white-space:nowrap"><span class="cb" style="display:inline-block;transform:scaleX(0.94);transform-origin:0 50%">Group2</span></div>
<div style="position:absolute;left:757.80px;top:230.98px;width:54.40px;overflow:hidden;line-height:14px;font-size:10px;font-weight:bold;color:#1c1c1c;white-space:nowrap"><span class="cb" style="display:inline-block;transform:scaleX(0.94);transform-origin:0 50%">Row Labels</span></div>
<svg style="position:absolute;left:812.2px;top:231.28px;" width="12" height="12" viewBox="0 0 12 12"><rect x="0.5" y="0.5" width="11" height="11" fill="#f7f7f7" stroke="#c8c8c8"/><path d="M3.5 5 H8.5 L6 7.5 Z" fill="#6b6b6b"/></svg>
<div style="position:absolute;left:827.20px;top:230.98px;width:84.20px;overflow:hidden;line-height:14px;font-size:10px;font-weight:bold;color:#1c1c1c;white-space:nowrap"><span class="cb" style="display:inline-block;transform:scaleX(0.94);transform-origin:0 50%">January</span></div>
<div style="position:absolute;left:913.40px;top:230.98px;width:50.70px;overflow:hidden;line-height:14px;font-size:10px;font-weight:bold;color:#1c1c1c;white-space:nowrap"><span class="cb" style="display:inline-block;transform:scaleX(0.94);transform-origin:0 50%">February</span></div>
<div style="position:absolute;left:966.10px;top:230.98px;width:45.20px;overflow:hidden;line-height:14px;font-size:10px;font-weight:bold;color:#1c1c1c;white-space:nowrap"><span class="cb" style="display:inline-block;transform:scaleX(0.94);transform-origin:0 50%">March</span></div>
<div style="position:absolute;left:1079.30px;top:230.98px;width:47.70px;overflow:hidden;line-height:14px;font-size:10px;font-weight:bold;color:#1c1c1c;white-space:nowrap"><span class="cb" style="display:inline-block;transform:scaleX(0.94);transform-origin:0 50%">April</span></div>
<div style="position:absolute;left:1129.00px;top:230.98px;width:34.50px;overflow:hidden;line-height:14px;font-size:10px;font-weight:bold;color:#1c1c1c;white-space:nowrap"><span class="cb" style="display:inline-block;transform:scaleX(0.94);transform-origin:0 50%">May</span></div>
<div style="position:absolute;left:757.80px;top:246.05px;width:67.40px;overflow:hidden;line-height:14px;font-size:10px;font-weight:normal;color:#1c1c1c;white-space:nowrap"><span class="c" style="display:inline-block;transform:scaleX(1.02);transform-origin:0 50%">Gonzales</span></div>
<div style="position:absolute;left:825.20px;top:246.05px;width:84.20px;overflow:hidden;text-align:right;line-height:14px;font-size:10px;font-weight:normal;color:#1c1c1c;white-space:nowrap"><span class="c" style="display:inline-block;transform:scaleX(0.945);transform-origin:100% 50%">21321</span></div>
<div style="position:absolute;left:911.40px;top:246.05px;width:50.70px;overflow:hidden;text-align:right;line-height:14px;font-size:10px;font-weight:normal;color:#1c1c1c;white-space:nowrap"><span class="c" style="display:inline-block;transform:scaleX(0.945);transform-origin:100% 50%">147883.75</span></div>
<div style="position:absolute;left:964.10px;top:246.05px;width:45.20px;overflow:hidden;text-align:right;line-height:14px;font-size:10px;font-weight:normal;color:#1c1c1c;white-space:nowrap"><span class="c" style="display:inline-block;transform:scaleX(0.945);transform-origin:100% 50%">9594.8</span></div>
<div style="position:absolute;left:1011.30px;top:246.05px;width:64.00px;overflow:hidden;text-align:right;line-height:14px;font-size:10px;font-weight:normal;color:#1c1c1c;white-space:nowrap"><span class="c" style="display:inline-block;transform:scaleX(0.945);transform-origin:100% 50%">178799.55</span></div>
<div style="position:absolute;left:1077.30px;top:246.05px;width:47.70px;overflow:hidden;text-align:right;line-height:14px;font-size:10px;font-weight:normal;color:#1c1c1c;white-space:nowrap"><span class="c" style="display:inline-block;transform:scaleX(0.945);transform-origin:100% 50%">131787.4</span></div>
<div style="position:absolute;left:1127.00px;top:246.05px;width:36.50px;overflow:hidden;line-height:14px;font-size:10px;color:#1c1c1c;white-space:nowrap;text-align:right;direction:rtl"><span class="c" style="display:inline-block;transform:scaleX(0.945);transform-origin:100% 50%">119204</span></div>
<div style="position:absolute;left:757.80px;top:261.12px;width:67.40px;overflow:hidden;line-height:14px;font-size:10px;font-weight:normal;color:#1c1c1c;white-space:nowrap"><span class="c" style="display:inline-block;transform:scaleX(1.02);transform-origin:0 50%">Jones</span></div>
<div style="position:absolute;left:825.20px;top:261.12px;width:84.20px;overflow:hidden;text-align:right;line-height:14px;font-size:10px;font-weight:normal;color:#1c1c1c;white-space:nowrap"><span class="c" style="display:inline-block;transform:scaleX(0.945);transform-origin:100% 50%">140337</span></div>
<div style="position:absolute;left:911.40px;top:261.12px;width:50.70px;overflow:hidden;text-align:right;line-height:14px;font-size:10px;font-weight:normal;color:#1c1c1c;white-space:nowrap"><span class="c" style="display:inline-block;transform:scaleX(0.945);transform-origin:100% 50%">118481.5</span></div>
<div style="position:absolute;left:964.10px;top:261.12px;width:45.20px;overflow:hidden;text-align:right;line-height:14px;font-size:10px;font-weight:normal;color:#1c1c1c;white-space:nowrap"><span class="c" style="display:inline-block;transform:scaleX(0.945);transform-origin:100% 50%">109709.4</span></div>
<div style="position:absolute;left:1011.30px;top:261.12px;width:64.00px;overflow:hidden;text-align:right;line-height:14px;font-size:10px;font-weight:normal;color:#1c1c1c;white-space:nowrap"><span class="c" style="display:inline-block;transform:scaleX(0.945);transform-origin:100% 50%">368527.9</span></div>
<div style="position:absolute;left:1077.30px;top:261.12px;width:47.70px;overflow:hidden;text-align:right;line-height:14px;font-size:10px;font-weight:normal;color:#1c1c1c;white-space:nowrap"><span class="c" style="display:inline-block;transform:scaleX(0.945);transform-origin:100% 50%">50223.3</span></div>
<div style="position:absolute;left:1127.00px;top:261.12px;width:36.50px;overflow:hidden;line-height:14px;font-size:10px;color:#1c1c1c;white-space:nowrap;text-align:right;direction:rtl"><span class="c" style="display:inline-block;transform:scaleX(0.945);transform-origin:100% 50%">90561</span></div>
<div style="position:absolute;left:757.80px;top:276.19px;width:67.40px;overflow:hidden;line-height:14px;font-size:10px;font-weight:normal;color:#1c1c1c;white-space:nowrap"><span class="c" style="display:inline-block;transform:scaleX(1.02);transform-origin:0 50%">McLearley</span></div>
<div style="position:absolute;left:825.20px;top:276.19px;width:84.20px;overflow:hidden;text-align:right;line-height:14px;font-size:10px;font-weight:normal;color:#1c1c1c;white-space:nowrap"><span class="c" style="display:inline-block;transform:scaleX(0.945);transform-origin:100% 50%">140337</span></div>
<div style="position:absolute;left:911.40px;top:276.19px;width:50.70px;overflow:hidden;text-align:right;line-height:14px;font-size:10px;font-weight:normal;color:#1c1c1c;white-space:nowrap"><span class="c" style="display:inline-block;transform:scaleX(0.945);transform-origin:100% 50%">150180.5</span></div>
<div style="position:absolute;left:964.10px;top:276.19px;width:45.20px;overflow:hidden;text-align:right;line-height:14px;font-size:10px;font-weight:normal;color:#1c1c1c;white-space:nowrap"><span class="c" style="display:inline-block;transform:scaleX(0.945);transform-origin:100% 50%">113330.5</span></div>
<div style="position:absolute;left:1011.30px;top:276.19px;width:64.00px;overflow:hidden;text-align:right;line-height:14px;font-size:10px;font-weight:normal;color:#1c1c1c;white-space:nowrap"><span class="c" style="display:inline-block;transform:scaleX(0.945);transform-origin:100% 50%">403848</span></div>
<div style="position:absolute;left:1077.30px;top:276.19px;width:47.70px;overflow:hidden;text-align:right;line-height:14px;font-size:10px;font-weight:normal;color:#1c1c1c;white-space:nowrap"><span class="c" style="display:inline-block;transform:scaleX(0.945);transform-origin:100% 50%">128824.3</span></div>
<div style="position:absolute;left:1127.00px;top:276.19px;width:36.50px;overflow:hidden;line-height:14px;font-size:10px;color:#1c1c1c;white-space:nowrap;text-align:right;direction:rtl"><span class="c" style="display:inline-block;transform:scaleX(0.945);transform-origin:100% 50%">78708</span></div>
<div style="position:absolute;left:757.80px;top:291.26px;width:67.40px;overflow:hidden;line-height:14px;font-size:10px;font-weight:normal;color:#1c1c1c;white-space:nowrap"><span class="c" style="display:inline-block;transform:scaleX(1.02);transform-origin:0 50%">Robertson</span></div>
<div style="position:absolute;left:825.20px;top:291.26px;width:84.20px;overflow:hidden;text-align:right;line-height:14px;font-size:10px;font-weight:normal;color:#1c1c1c;white-space:nowrap"><span class="c" style="display:inline-block;transform:scaleX(0.945);transform-origin:100% 50%">138600</span></div>
<div style="position:absolute;left:911.40px;top:291.26px;width:50.70px;overflow:hidden;text-align:right;line-height:14px;font-size:10px;font-weight:normal;color:#1c1c1c;white-space:nowrap"><span class="c" style="display:inline-block;transform:scaleX(0.945);transform-origin:100% 50%">29322</span></div>
<div style="position:absolute;left:964.10px;top:291.26px;width:45.20px;overflow:hidden;text-align:right;line-height:14px;font-size:10px;font-weight:normal;color:#1c1c1c;white-space:nowrap"><span class="c" style="display:inline-block;transform:scaleX(0.945);transform-origin:100% 50%">87754</span></div>
<div style="position:absolute;left:1011.30px;top:291.26px;width:64.00px;overflow:hidden;text-align:right;line-height:14px;font-size:10px;font-weight:normal;color:#1c1c1c;white-space:nowrap"><span class="c" style="display:inline-block;transform:scaleX(0.945);transform-origin:100% 50%">255676</span></div>
<div style="position:absolute;left:1077.30px;top:291.26px;width:47.70px;overflow:hidden;text-align:right;line-height:14px;font-size:10px;font-weight:normal;color:#1c1c1c;white-space:nowrap"><span class="c" style="display:inline-block;transform:scaleX(0.945);transform-origin:100% 50%">51169.5</span></div>
<div style="position:absolute;left:1127.00px;top:291.26px;width:36.50px;overflow:hidden;line-height:14px;font-size:10px;color:#1c1c1c;white-space:nowrap;text-align:right;direction:rtl"><span class="c" style="display:inline-block;transform:scaleX(0.945);transform-origin:100% 50%">44761</span></div>
<div style="position:absolute;left:757.80px;top:306.33px;width:67.40px;overflow:hidden;line-height:14px;font-size:10px;font-weight:normal;color:#1c1c1c;white-space:nowrap"><span class="c" style="display:inline-block;transform:scaleX(1.02);transform-origin:0 50%">Smith</span></div>
<div style="position:absolute;left:825.20px;top:306.33px;width:84.20px;overflow:hidden;text-align:right;line-height:14px;font-size:10px;font-weight:normal;color:#1c1c1c;white-space:nowrap"><span class="c" style="display:inline-block;transform:scaleX(0.945);transform-origin:100% 50%">72741</span></div>
<div style="position:absolute;left:911.40px;top:306.33px;width:50.70px;overflow:hidden;text-align:right;line-height:14px;font-size:10px;font-weight:normal;color:#1c1c1c;white-space:nowrap"><span class="c" style="display:inline-block;transform:scaleX(0.945);transform-origin:100% 50%">75477</span></div>
<div style="position:absolute;left:964.10px;top:306.33px;width:45.20px;overflow:hidden;text-align:right;line-height:14px;font-size:10px;font-weight:normal;color:#1c1c1c;white-space:nowrap"><span class="c" style="display:inline-block;transform:scaleX(0.945);transform-origin:100% 50%">102816</span></div>
<div style="position:absolute;left:1011.30px;top:306.33px;width:64.00px;overflow:hidden;text-align:right;line-height:14px;font-size:10px;font-weight:normal;color:#1c1c1c;white-space:nowrap"><span class="c" style="display:inline-block;transform:scaleX(0.945);transform-origin:100% 50%">251034</span></div>
<div style="position:absolute;left:1077.30px;top:306.33px;width:47.70px;overflow:hidden;text-align:right;line-height:14px;font-size:10px;font-weight:normal;color:#1c1c1c;white-space:nowrap"><span class="c" style="display:inline-block;transform:scaleX(0.945);transform-origin:100% 50%">278489.9</span></div>
<div style="position:absolute;left:1127.00px;top:306.33px;width:36.50px;overflow:hidden;line-height:14px;font-size:10px;color:#1c1c1c;white-space:nowrap;text-align:right;direction:rtl"><span class="c" style="display:inline-block;transform:scaleX(0.945);transform-origin:100% 50%">95275</span></div>
<div style="position:absolute;left:755.8px;top:319.7px;width:407.70000000000005px;height:15.569999999999993px;background:#dce6f1;"></div>
<div style="position:absolute;left:755.8px;top:319.2px;width:407.70000000000005px;height:1px;background:#b2c6dd;"></div>
<div style="position:absolute;left:757.80px;top:321.40px;width:67.40px;overflow:hidden;line-height:14px;font-size:10px;font-weight:bold;color:#1c1c1c;white-space:nowrap"><span class="cb" style="display:inline-block;transform:scaleX(0.94);transform-origin:0 50%">Grand Total</span></div>
<div style="position:absolute;left:825.20px;top:321.40px;width:84.20px;overflow:hidden;text-align:right;line-height:14px;font-size:10px;font-weight:bold;color:#1c1c1c;white-space:nowrap"><span class="cb" style="display:inline-block;transform:scaleX(0.945);transform-origin:100% 50%">513336</span></div>
<div style="position:absolute;left:911.40px;top:321.40px;width:50.70px;overflow:hidden;text-align:right;line-height:14px;font-size:10px;font-weight:bold;color:#1c1c1c;white-space:nowrap"><span class="cb" style="display:inline-block;transform:scaleX(0.945);transform-origin:100% 50%">521344.75</span></div>
<div style="position:absolute;left:964.10px;top:321.40px;width:45.20px;overflow:hidden;text-align:right;line-height:14px;font-size:10px;font-weight:bold;color:#1c1c1c;white-space:nowrap"><span class="cb" style="display:inline-block;transform:scaleX(0.945);transform-origin:100% 50%">423204.7</span></div>
<div style="position:absolute;left:1011.30px;top:321.40px;width:64.00px;overflow:hidden;text-align:right;line-height:14px;font-size:10px;font-weight:bold;color:#1c1c1c;white-space:nowrap"><span class="cb" style="display:inline-block;transform:scaleX(0.945);transform-origin:100% 50%">1457885.45</span></div>
<div style="position:absolute;left:1077.30px;top:321.40px;width:47.70px;overflow:hidden;text-align:right;line-height:14px;font-size:10px;font-weight:bold;color:#1c1c1c;white-space:nowrap"><span class="cb" style="display:inline-block;transform:scaleX(0.945);transform-origin:100% 50%">640494.4</span></div>
<div style="position:absolute;left:1127.00px;top:321.40px;width:36.50px;overflow:hidden;line-height:14px;font-size:10px;font-weight:bold;color:#1c1c1c;white-space:nowrap;text-align:right;direction:rtl"><span class="cb" style="display:inline-block;transform:scaleX(0.945);transform-origin:100% 50%">428512</span></div>
<div style="position:absolute;left:755.8px;top:349.84000000000003px;width:156.10000000000002px;height:15.569999999999936px;background:#dce6f1;"></div>
<div style="position:absolute;left:755.8px;top:364.40999999999997px;width:155.60000000000002px;height:1px;background:#b2c6dd;"></div>
<div style="position:absolute;left:757.80px;top:351.54px;width:67.40px;overflow:hidden;line-height:14px;font-size:10px;font-weight:normal;color:#1c1c1c;white-space:nowrap"><span class="c" style="display:inline-block;transform:scaleX(1.02);transform-origin:0 50%">Year</span></div>
<div style="position:absolute;left:827.20px;top:351.54px;width:71.20px;overflow:hidden;line-height:14px;font-size:10px;font-weight:normal;color:#1c1c1c;white-space:nowrap"><span class="c" style="display:inline-block;transform:scaleX(1.08);transform-origin:0 50%">(Multiple Items)</span></div>
<svg style="position:absolute;left:898.4px;top:351.84000000000003px;" width="12" height="12" viewBox="0 0 12 12"><rect x="0.5" y="0.5" width="11" height="11" fill="#f7f7f7" stroke="#c8c8c8"/><path d="M3 3.5 H9.5 L7 6.5 V9.5 H5.5 V6.5 Z" fill="#555"/><path d="M2 8.5 H4 L3 9.5Z" fill="#555"/></svg>
<div style="position:absolute;left:755.8px;top:379.98px;width:156.10000000000002px;height:15.569999999999993px;background:#dce6f1;"></div>
<div style="position:absolute;left:755.8px;top:394.55px;width:155.60000000000002px;height:1px;background:#b2c6dd;"></div>
<div style="position:absolute;left:757.80px;top:381.68px;width:54.40px;overflow:hidden;line-height:14px;font-size:10px;font-weight:bold;color:#1c1c1c;white-space:nowrap"><span class="cb" style="display:inline-block;transform:scaleX(0.94);transform-origin:0 50%">Row Labels</span></div>
<svg style="position:absolute;left:812.2px;top:381.98px;" width="12" height="12" viewBox="0 0 12 12"><rect x="0.5" y="0.5" width="11" height="11" fill="#f7f7f7" stroke="#c8c8c8"/><path d="M3.5 5 H8.5 L6 7.5 Z" fill="#6b6b6b"/></svg>
<div style="position:absolute;left:827.20px;top:381.68px;width:84.20px;overflow:hidden;line-height:14px;font-size:10px;font-weight:bold;color:#1c1c1c;white-space:nowrap"><span class="cb" style="display:inline-block;transform:scaleX(0.94);transform-origin:0 50%">Sum of Sales</span></div>
<div style="position:absolute;left:757.80px;top:396.75px;width:67.40px;overflow:hidden;line-height:14px;font-size:10px;font-weight:normal;color:#1c1c1c;white-space:nowrap"><span class="c" style="display:inline-block;transform:scaleX(1.02);transform-origin:0 50%">Central</span></div>
<div style="position:absolute;left:825.20px;top:396.75px;width:84.20px;overflow:hidden;text-align:right;line-height:14px;font-size:10px;font-weight:normal;color:#1c1c1c;white-space:nowrap"><span class="c" style="display:inline-block;transform:scaleX(0.945);transform-origin:100% 50%">908439.3</span></div>
<div style="position:absolute;left:757.80px;top:411.82px;width:67.40px;overflow:hidden;line-height:14px;font-size:10px;font-weight:normal;color:#1c1c1c;white-space:nowrap"><span class="c" style="display:inline-block;transform:scaleX(1.02);transform-origin:0 50%">North</span></div>
<div style="position:absolute;left:825.20px;top:411.82px;width:84.20px;overflow:hidden;text-align:right;line-height:14px;font-size:10px;font-weight:normal;color:#1c1c1c;white-space:nowrap"><span class="c" style="display:inline-block;transform:scaleX(0.945);transform-origin:100% 50%">490399.8</span></div>
<div style="position:absolute;left:757.80px;top:426.89px;width:67.40px;overflow:hidden;line-height:14px;font-size:10px;font-weight:normal;color:#1c1c1c;white-space:nowrap"><span class="c" style="display:inline-block;transform:scaleX(1.02);transform-origin:0 50%">South</span></div>
<div style="position:absolute;left:825.20px;top:426.89px;width:84.20px;overflow:hidden;text-align:right;line-height:14px;font-size:10px;font-weight:normal;color:#1c1c1c;white-space:nowrap"><span class="c" style="display:inline-block;transform:scaleX(0.945);transform-origin:100% 50%">325599.95</span></div>
<div style="position:absolute;left:757.80px;top:441.96px;width:67.40px;overflow:hidden;line-height:14px;font-size:10px;font-weight:normal;color:#1c1c1c;white-space:nowrap"><span class="c" style="display:inline-block;transform:scaleX(1.02);transform-origin:0 50%">West</span></div>
<div style="position:absolute;left:825.20px;top:441.96px;width:84.20px;overflow:hidden;text-align:right;line-height:14px;font-size:10px;font-weight:normal;color:#1c1c1c;white-space:nowrap"><span class="c" style="display:inline-block;transform:scaleX(0.945);transform-origin:100% 50%">391451.9</span></div>
<div style="position:absolute;left:755.8px;top:455.33px;width:156.10000000000002px;height:15.569999999999993px;background:#dce6f1;"></div>
<div style="position:absolute;left:755.8px;top:454.83px;width:155.60000000000002px;height:1px;background:#b2c6dd;"></div>
<div style="position:absolute;left:757.80px;top:457.03px;width:67.40px;overflow:hidden;line-height:14px;font-size:10px;font-weight:bold;color:#1c1c1c;white-space:nowrap"><span class="cb" style="display:inline-block;transform:scaleX(0.94);transform-origin:0 50%">Grand Total</span></div>
<div style="position:absolute;left:825.20px;top:457.03px;width:84.20px;overflow:hidden;text-align:right;line-height:14px;font-size:10px;font-weight:bold;color:#1c1c1c;white-space:nowrap"><span class="cb" style="display:inline-block;transform:scaleX(0.945);transform-origin:100% 50%">2115890.95</span></div>
<div style="position:absolute;left:1163.5px;top:152px;width:16.5px;height:599.6px;background:#e6e6e6;"></div>
<div style="position:absolute;left:1166.7px;top:156px;width:11px;height:11px;background:#fff;border:1px solid #c8c8c8;"></div>
<svg style="position:absolute;left:1169px;top:159px;" width="7" height="5" viewBox="0 0 7 5"><path d="M0.5 4 H6 L3.3 1 Z" fill="#555"/></svg>
<div style="position:absolute;left:1166.7px;top:167px;width:11px;height:575px;background:#dcdcdc;"></div>
<div style="position:absolute;left:1166.7px;top:167px;width:11px;height:518px;background:#fff;border:1px solid #c8c8c8;"></div>
<div style="position:absolute;left:1166.7px;top:741.5px;width:11px;height:10.5px;background:#fff;border:1px solid #c8c8c8;"></div>
<svg style="position:absolute;left:1169px;top:744.5px;" width="7" height="5" viewBox="0 0 7 5"><path d="M0.5 1 H6 L3.3 4 Z" fill="#555"/></svg>
<div style="position:absolute;left:1163.0px;top:169px;width:1px;height:582.6px;background:#c6c6c6;"></div>
<div style="position:absolute;left:0px;top:751.6px;width:1180px;height:16.399999999999977px;background:#e6e6e6;border-top:1px solid #c6c6c6;"></div>
<svg style="position:absolute;left:14px;top:757px;" width="30" height="10" viewBox="0 0 30 10"><path d="M5.5 2 L2.5 5 L5.5 8" fill="none" stroke="#b0b0b0" stroke-width="1"/><path d="M24.5 2 L27.5 5 L24.5 8" fill="none" stroke="#b0b0b0" stroke-width="1"/></svg>
<div style="position:absolute;left:72px;top:751.1px;width:49px;height:17.399999999999977px;background:#fff;border-left:1px solid #c6c6c6;border-right:1px solid #c6c6c6;"></div>
<div style="position:absolute;left:80.5px;top:754.60px;line-height:14px;font-size:9.6px;color:#217346;font-weight:bold;white-space:nowrap;letter-spacing:-0.2px;">Sheet2</div>
<div style="position:absolute;left:130.4px;top:754.60px;line-height:14px;font-size:9.6px;color:#444;font-weight:normal;white-space:nowrap;">Sales Data</div>
<div style="position:absolute;left:186px;top:754px;width:1px;height:14px;background:#b8b8b8;"></div>
<svg style="position:absolute;left:211px;top:755px;" width="13" height="13" viewBox="0 0 13 13"><circle cx="6.5" cy="6.5" r="5.8" fill="none" stroke="#666" stroke-width="1"/><path d="M3.5 6.5 H9.5 M6.5 3.5 V9.5" stroke="#666" stroke-width="1.1"/></svg>
<svg style="position:absolute;left:704px;top:755px;" width="4" height="12" viewBox="0 0 4 12"><g fill="#a0a0a0"><rect x="1.5" y="1" width="1" height="1.3"/><rect x="1.5" y="5" width="1" height="1.3"/><rect x="1.5" y="9" width="1" height="1.3"/></g></svg>
<div style="position:absolute;left:719.5px;top:756.8px;width:10.5px;height:11px;background:#fff;border:1px solid #c8c8c8;"></div>
<svg style="position:absolute;left:722px;top:759px;" width="6" height="7" viewBox="0 0 6 7"><path d="M4.5 0.5 V6 L1 3.2 Z" fill="#555"/></svg>
<div style="position:absolute;left:730px;top:756.8px;width:423px;height:11px;background:#dcdcdc;"></div>
<div style="position:absolute;left:730px;top:756.8px;width:292px;height:11px;background:#fff;border:1px solid #c8c8c8;"></div>
<div style="position:absolute;left:1153px;top:756.8px;width:11px;height:11px;background:#fff;border:1px solid #c8c8c8;"></div>
<svg style="position:absolute;left:1156px;top:759px;" width="6" height="7" viewBox="0 0 6 7"><path d="M1.5 0.5 V6 L5 3.2 Z" fill="#555"/></svg>
<svg style="position:absolute;left:168px;top:127px;" width="12" height="17" viewBox="0 0 12 17"><path d="M0.8 0.8 V13.5 L3.8 10.8 L6 15.8 L8.2 14.8 L6 10 H10.2 Z" fill="#111" stroke="#fff" stroke-width="0.9" stroke-linejoin="round"/></svg>
<div style="position:absolute;left:1180px;top:150px;width:265px;height:618px;background:#e6e6e6;border-left:1px solid #c8c8c8;"></div>
<div style="position:absolute;left:1190.5px;top:167.30px;line-height:14px;font-size:15.3px;color:#31835e;font-weight:normal;white-space:nowrap;">PivotTable Fields</div>
<svg style="position:absolute;left:1390px;top:168px;" width="9" height="6" viewBox="0 0 9 6"><path d="M0.5 0.5 H8 L4.2 4.5 Z" fill="#555"/></svg>
<svg style="position:absolute;left:1421px;top:167px;" width="10" height="10" viewBox="0 0 10 10"><path d="M1 1 L8.5 8.5 M8.5 1 L1 8.5" stroke="#444" stroke-width="1.1" fill="none"/></svg>
<div style="position:absolute;left:1190.8px;top:192.80px;line-height:14px;font-size:8.9px;color:#444;font-weight:normal;white-space:nowrap;">Choose fields to add to report:</div>
<div style="position:absolute;left:1400px;top:189.6px;width:33.5px;height:20px;background:#fff;border:1px solid #c6c6c6;"></div>
<svg style="position:absolute;left:1406px;top:193px;" width="14" height="14" viewBox="0 0 14 14"><g fill="none" stroke="#555" stroke-width="1"><circle cx="6.5" cy="6.5" r="2.1"/><path d="M6.5 1 L7.8 2.6 L9.8 1.8 L10.1 3.9 L12.1 4.5 L11.2 6.5 L12.1 8.5 L10.1 9.1 L9.8 11.2 L7.8 10.4 L6.5 12 L5.2 10.4 L3.2 11.2 L2.9 9.1 L0.9 8.5 L1.8 6.5 L0.9 4.5 L2.9 3.9 L3.2 1.8 L5.2 2.6 Z"/></g></svg>
<svg style="position:absolute;left:1423px;top:198px;" width="7" height="4" viewBox="0 0 7 4"><path d="M0.5 0.5 H6 L3.2 3.5 Z" fill="#555"/></svg>
<div style="position:absolute;left:1190.2px;top:219.8px;width:243.2px;height:15px;background:#fff;border:1px solid #c6c6c6;"></div>
<div style="position:absolute;left:1192px;top:219.80px;line-height:14px;font-size:8.7px;color:#888;font-weight:normal;white-space:nowrap;">Search</div>
<svg style="position:absolute;left:1419px;top:220.5px;" width="14" height="14" viewBox="0 0 14 14"><g fill="none" stroke="#555" stroke-width="1"><circle cx="8" cy="5.5" r="3.8"/><path d="M5.3 8.2 L1.5 12"/></g></svg>
<div style="position:absolute;left:1190px;top:246.2px;width:243.4px;height:216.3px;background:#fff;"></div>
<svg style="position:absolute;left:1191px;top:247.5px;" width="11" height="11" viewBox="0 0 11 11"><rect x="0.5" y="0.5" width="9.5" height="9.5" fill="#fff" stroke="#8a8a8a" stroke-width="0.9"/></svg>
<div style="position:absolute;left:1206.1px;top:245.80px;line-height:14px;font-size:8.9px;color:#444;font-weight:normal;white-space:nowrap;letter-spacing:0px;">Year</div>
<svg style="position:absolute;left:1191px;top:261.8px;" width="11" height="11" viewBox="0 0 11 11"><rect x="0.5" y="0.5" width="9.5" height="9.5" fill="#fff" stroke="#8a8a8a" stroke-width="0.9"/><path d="M2 5.5 L4.3 7.8 L8.8 2.3" fill="none" stroke="#444" stroke-width="0.9"/></svg>
<div style="position:absolute;left:1206.1px;top:260.10px;line-height:14px;font-size:8.9px;color:#333;font-weight:bold;white-space:nowrap;letter-spacing:-0.1px;">Month</div>
<svg style="position:absolute;left:1191px;top:276.1px;" width="11" height="11" viewBox="0 0 11 11"><rect x="0.5" y="0.5" width="9.5" height="9.5" fill="#fff" stroke="#8a8a8a" stroke-width="0.9"/></svg>
<div style="position:absolute;left:1206.1px;top:274.40px;line-height:14px;font-size:8.9px;color:#444;font-weight:normal;white-space:nowrap;letter-spacing:0px;">Type</div>
<svg style="position:absolute;left:1191px;top:290.4px;" width="11" height="11" viewBox="0 0 11 11"><rect x="0.5" y="0.5" width="9.5" height="9.5" fill="#fff" stroke="#8a8a8a" stroke-width="0.9"/></svg>
<div style="position:absolute;left:1206.1px;top:288.70px;line-height:14px;font-size:8.9px;color:#444;font-weight:normal;white-space:nowrap;letter-spacing:0px;">Salesperson</div>
<svg style="position:absolute;left:1191px;top:304.7px;" width="11" height="11" viewBox="0 0 11 11"><rect x="0.5" y="0.5" width="9.5" height="9.5" fill="#fff" stroke="#8a8a8a" stroke-width="0.9"/></svg>
<div style="position:absolute;left:1206.1px;top:303.00px;line-height:14px;font-size:8.9px;color:#444;font-weight:normal;white-space:nowrap;letter-spacing:0px;">Region</div>
<svg style="position:absolute;left:1191px;top:319.0px;" width="11" height="11" viewBox="0 0 11 11"><rect x="0.5" y="0.5" width="9.5" height="9.5" fill="#fff" stroke="#8a8a8a" stroke-width="0.9"/><path d="M2 5.5 L4.3 7.8 L8.8 2.3" fill="none" stroke="#444" stroke-width="0.9"/></svg>
<div style="position:absolute;left:1206.1px;top:317.30px;line-height:14px;font-size:8.9px;color:#333;font-weight:bold;white-space:nowrap;letter-spacing:-0.1px;">Sales</div>
<svg style="position:absolute;left:1191px;top:333.3px;" width="11" height="11" viewBox="0 0 11 11"><rect x="0.5" y="0.5" width="9.5" height="9.5" fill="#fff" stroke="#8a8a8a" stroke-width="0.9"/></svg>
<div style="position:absolute;left:1206.1px;top:331.60px;line-height:14px;font-size:8.9px;color:#444;font-weight:normal;white-space:nowrap;letter-spacing:0px;">Units</div>
<svg style="position:absolute;left:1191px;top:347.6px;" width="11" height="11" viewBox="0 0 11 11"><rect x="0.5" y="0.5" width="9.5" height="9.5" fill="#fff" stroke="#8a8a8a" stroke-width="0.9"/></svg>
<div style="position:absolute;left:1206.1px;top:345.90px;line-height:14px;font-size:8.9px;color:#444;font-weight:normal;white-space:nowrap;letter-spacing:0px;">Order #</div>
<svg style="position:absolute;left:1191px;top:361.9px;" width="11" height="11" viewBox="0 0 11 11"><rect x="0.5" y="0.5" width="9.5" height="9.5" fill="#fff" stroke="#8a8a8a" stroke-width="0.9"/><path d="M2 5.5 L4.3 7.8 L8.8 2.3" fill="none" stroke="#444" stroke-width="0.9"/></svg>
<div style="position:absolute;left:1206.1px;top:360.20px;line-height:14px;font-size:8.9px;color:#333;font-weight:bold;white-space:nowrap;letter-spacing:-0.1px;">Month2</div>
<div style="position:absolute;left:1191.8px;top:380.70px;line-height:14px;font-size:8.7px;color:#555;font-weight:normal;white-space:nowrap;">More Tables...</div>
<div style="position:absolute;left:1190.6px;top:475px;width:243px;height:1px;background-image:linear-gradient(90deg,#c4c4c4 50%,transparent 50%);background-size:3px 1px;"></div>
<div style="position:absolute;left:1192.7px;top:478.00px;line-height:14px;font-size:8.8px;color:#444;font-weight:normal;white-space:nowrap;">Drag fields between areas below:</div>
<svg style="position:absolute;left:1195px;top:505px;" width="9" height="9" viewBox="0 0 9 9"><path d="M0.5 0.5 H8.5 L5.5 4 V8.5 H3.5 V4 Z" fill="#777"/></svg>
<div style="position:absolute;left:1209.4px;top:502.40px;line-height:14px;font-size:8.9px;color:#444;font-weight:normal;white-space:nowrap;">Filters</div>
<svg style="position:absolute;left:1318px;top:505px;" width="8" height="9" viewBox="0 0 8 9"><g fill="#a8a8a8"><rect x="0" y="0" width="2" height="8"/><rect x="3" y="0" width="2" height="8"/><rect x="6" y="0" width="2" height="8"/></g></svg>
<div style="position:absolute;left:1331.7px;top:502.40px;line-height:14px;font-size:8.9px;color:#444;font-weight:normal;white-space:nowrap;">Columns</div>
<div style="position:absolute;left:1192px;top:518.1px;width:115.6px;height:94.6px;background:#fff;"></div>
<div style="position:absolute;left:1314.6px;top:518.1px;width:118.7px;height:94.6px;background:#fff;"></div>
<div style="position:absolute;left:1312px;top:500px;width:1px;height:228px;background:#c8c8c8;"></div>
<div style="position:absolute;left:1192px;top:617px;width:241.3px;height:1px;background:#c8c8c8;"></div>
<div style="position:absolute;left:1315.6px;top:519.2px;width:117.1px;height:15.2px;background:#fff;border:1px solid #c6c6c6;"></div>
<div style="position:absolute;left:1321.5px;top:519.80px;line-height:14px;font-size:10px;color:#444;font-weight:normal;white-space:nowrap;">Σ</div>
<div style="position:absolute;left:1334.4px;top:519.80px;line-height:14px;font-size:8.9px;color:#444;font-weight:normal;white-space:nowrap;">Values</div>
<svg style="position:absolute;left:1419px;top:525px;" width="7" height="4" viewBox="0 0 7 4"><path d="M0.5 0.5 H6 L3.2 3.5 Z" fill="#555"/></svg>
<svg style="position:absolute;left:1195.8px;top:625px;" width="8" height="8" viewBox="0 0 8 8"><g fill="#a8a8a8"><rect x="0" y="0" width="8" height="2"/><rect x="0" y="3" width="8" height="2"/><rect x="0" y="6" width="8" height="2"/></g></svg>
<div style="position:absolute;left:1209.6px;top:622.50px;line-height:14px;font-size:8.9px;color:#444;font-weight:normal;white-space:nowrap;">Rows</div>
<div style="position:absolute;left:1318.3px;top:622.30px;line-height:14px;font-size:10px;color:#777;font-weight:normal;white-space:nowrap;">Σ</div>
<div style="position:absolute;left:1331.9px;top:622.50px;line-height:14px;font-size:8.9px;color:#444;font-weight:normal;white-space:nowrap;">Values</div>
<div style="position:absolute;left:1192px;top:638.3px;width:115.6px;height:95.2px;background:#fff;"></div>
<div style="position:absolute;left:1314.6px;top:638.3px;width:118.7px;height:95.2px;background:#fff;"></div>
<div style="position:absolute;left:1193.2px;top:639.4px;width:113.5px;height:14.2px;background:#fff;border:1px solid #c6c6c6;"></div>
<div style="position:absolute;left:1198.4px;top:639.60px;line-height:14px;font-size:8.9px;color:#444;font-weight:normal;white-space:nowrap;">Month2</div>
<svg style="position:absolute;left:1293px;top:644.9px;" width="7" height="4" viewBox="0 0 7 4"><path d="M0.5 0.5 H6 L3.2 3.5 Z" fill="#555"/></svg>
<div style="position:absolute;left:1315px;top:639.4px;width:117.8px;height:14.2px;background:#fff;border:1px solid #c6c6c6;"></div>
<div style="position:absolute;left:1320.5px;top:639.60px;line-height:14px;font-size:8.9px;color:#444;font-weight:normal;white-space:nowrap;">Average of Sales</div>
<svg style="position:absolute;left:1419px;top:644.9px;" width="7" height="4" viewBox="0 0 7 4"><path d="M0.5 0.5 H6 L3.2 3.5 Z" fill="#555"/></svg>
<div style="position:absolute;left:1193.2px;top:655.4px;width:113.5px;height:14.2px;background:#fff;border:1px solid #c6c6c6;"></div>
<div style="position:absolute;left:1198.4px;top:655.60px;line-height:14px;font-size:8.9px;color:#444;font-weight:normal;white-space:nowrap;">Month</div>
<svg style="position:absolute;left:1293px;top:660.9px;" width="7" height="4" viewBox="0 0 7 4"><path d="M0.5 0.5 H6 L3.2 3.5 Z" fill="#555"/></svg>
<div style="position:absolute;left:1315px;top:655.4px;width:117.8px;height:14.2px;background:#fff;border:1px solid #c6c6c6;"></div>
<div style="position:absolute;left:1320.5px;top:655.60px;line-height:14px;font-size:8.9px;color:#444;font-weight:normal;white-space:nowrap;">Sum of Sales</div>
<svg style="position:absolute;left:1419px;top:660.9px;" width="7" height="4" viewBox="0 0 7 4"><path d="M0.5 0.5 H6 L3.2 3.5 Z" fill="#555"/></svg>
<svg style="position:absolute;left:1192px;top:752px;" width="11" height="11" viewBox="0 0 11 11"><rect x="0.5" y="0.5" width="9.5" height="9.5" fill="#fff" stroke="#8a8a8a" stroke-width="0.9"/></svg>
<div style="position:absolute;left:1206.7px;top:750.00px;line-height:14px;font-size:8.9px;color:#444;font-weight:normal;white-space:nowrap;">Defer Layout Update</div>
<div style="position:absolute;left:1398.2px;top:749.2px;width:34.6px;height:15px;background:#fafafa;border:1px solid #e8e8e8;"></div>
<div style="position:absolute;left:1395.50px;width:40px;text-align:center;top:749.80px;line-height:14px;font-size:8.7px;color:#b5b5b5;font-weight:normal;white-space:nowrap;">Update</div>
<div style="position:absolute;left:1443px;top:150px;width:2px;height:618px;background:#d0d0d0;"></div>
</body></html>
